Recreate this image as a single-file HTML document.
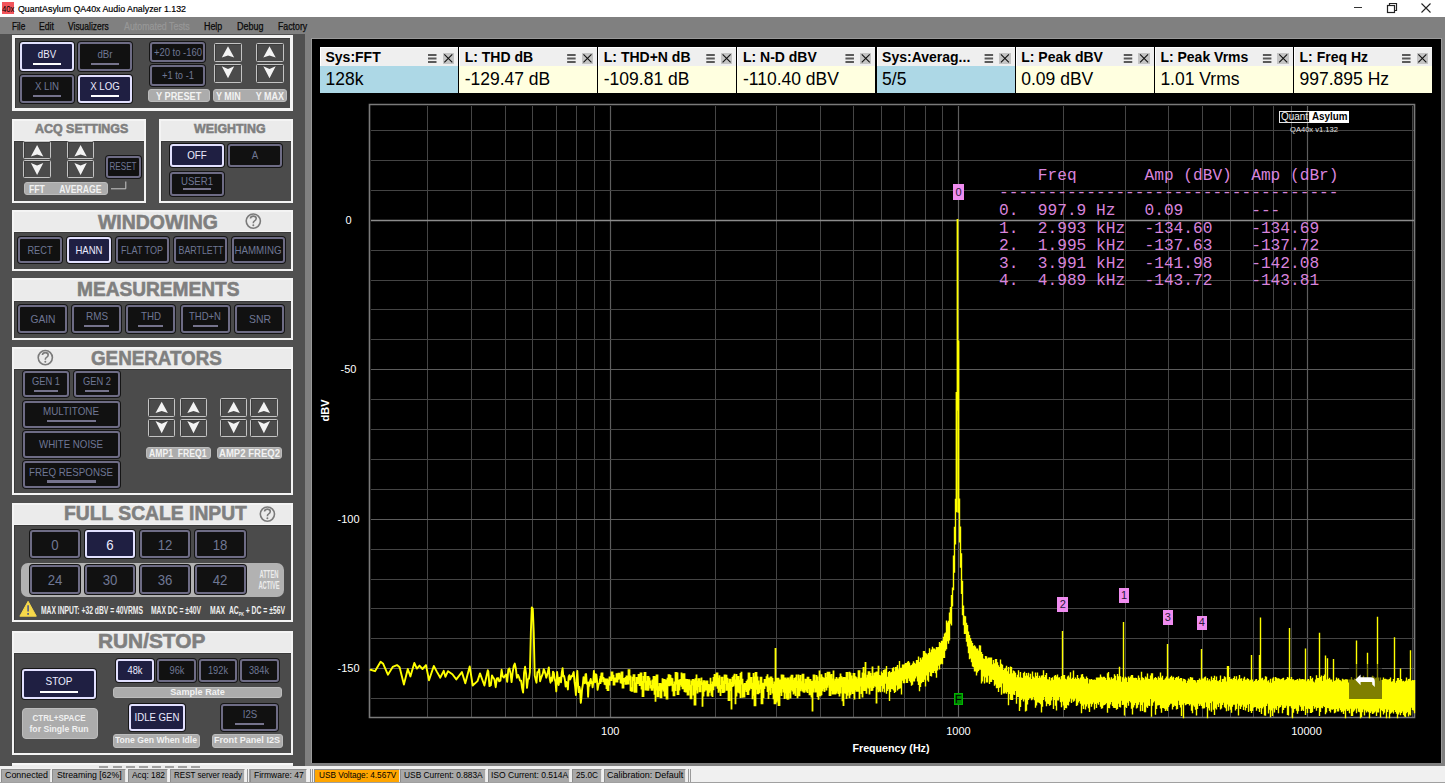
<!DOCTYPE html>
<html><head><meta charset="utf-8"><style>
html,body{margin:0;padding:0;width:1445px;height:783px;overflow:hidden;background:#fff}
body>div,body>svg{position:absolute}
svg{position:absolute;overflow:visible}
</style></head><body>
<div style="left:0px;top:0px;width:1445px;height:17px;background:#fff"></div>
<div style="left:2px;top:2px;width:12px;height:12px;background:#f2545b"></div>
<div style="left:1.50px;transform-origin:0 0;top:3.96px;font:normal 9.5px/9.5px 'Liberation Sans', sans-serif;color:#000;white-space:nowrap;transform:scaleX(0.8155);">40x</div>
<div style="left:17.50px;transform-origin:0 0;top:3.87px;font:normal 9.6px/9.6px 'Liberation Sans', sans-serif;color:#000;white-space:nowrap;transform:scaleX(0.9211);-webkit-text-stroke:0.2px #000;">QuantAsylum QA40x Audio Analyzer 1.132</div>
<div style="left:1354px;top:7px;width:8px;height:1px;background:#333"></div>
<svg style="left:1386px;top:2px" width="12" height="11"><rect x="1.5" y="3.5" width="7" height="7" fill="none" stroke="#222" stroke-width="1.2"/><path d="M3.5 3.5V1.5h7v7h-2" fill="none" stroke="#222" stroke-width="1.2"/></svg>
<svg style="left:1421px;top:3px" width="10" height="10"><path d="M0.5 0.5L9.5 9.5M9.5 0.5L0.5 9.5" stroke="#222" stroke-width="1.1"/></svg>
<div style="left:0px;top:17px;width:1445px;height:750px;background:#808080"></div>
<div style="left:11.50px;transform-origin:0 0;top:21.64px;font:normal 10px/10px 'Liberation Sans', sans-serif;color:#0a0a0a;white-space:nowrap;transform:scaleX(0.8248);-webkit-text-stroke:0.25px #0a0a0a;">File</div>
<div style="left:39.40px;transform-origin:0 0;top:21.64px;font:normal 10px/10px 'Liberation Sans', sans-serif;color:#0a0a0a;white-space:nowrap;transform:scaleX(0.8646);-webkit-text-stroke:0.25px #0a0a0a;">Edit</div>
<div style="left:68.20px;transform-origin:0 0;top:21.64px;font:normal 10px/10px 'Liberation Sans', sans-serif;color:#0a0a0a;white-space:nowrap;transform:scaleX(0.8470);-webkit-text-stroke:0.25px #0a0a0a;">Visualizers</div>
<div style="left:123.60px;transform-origin:0 0;top:21.64px;font:normal 10px/10px 'Liberation Sans', sans-serif;color:#979797;white-space:nowrap;transform:scaleX(0.8841);-webkit-text-stroke:0.25px #979797;">Automated Tests</div>
<div style="left:203.70px;transform-origin:0 0;top:21.64px;font:normal 10px/10px 'Liberation Sans', sans-serif;color:#0a0a0a;white-space:nowrap;transform:scaleX(0.8893);-webkit-text-stroke:0.25px #0a0a0a;">Help</div>
<div style="left:237.00px;transform-origin:0 0;top:21.64px;font:normal 10px/10px 'Liberation Sans', sans-serif;color:#0a0a0a;white-space:nowrap;transform:scaleX(0.8993);-webkit-text-stroke:0.25px #0a0a0a;">Debug</div>
<div style="left:277.50px;transform-origin:0 0;top:21.64px;font:normal 10px/10px 'Liberation Sans', sans-serif;color:#0a0a0a;white-space:nowrap;transform:scaleX(0.8757);-webkit-text-stroke:0.25px #0a0a0a;">Factory</div>
<div style="left:0px;top:34px;width:305px;height:734px;background:#505050"></div>
<div style="left:305px;top:34px;width:6px;height:734px;background:#808080"></div>
<div style="left:311px;top:38px;width:131px;height:1px;background:#9a9a9a"></div>
<div style="left:311px;top:38px;width:1131px;height:725px;background:#000;border-left:1px solid #9a9a9a;border-top:1px solid #9a9a9a;box-sizing:border-box"></div>
<div style="left:1441px;top:38px;width:1px;height:725px;background:#9a9a9a"></div>
<div style="left:0px;top:766px;width:1445px;height:17px;background:#f0f0f0"></div>
<div style="left:0px;top:782px;width:1445px;height:1px;background:#a0a0a0"></div>
<div style="left:1px;top:769px;width:50px;height:13px;background:#a8a8a8;border-left:1px solid #8c8c8c;border-top:1px solid #8c8c8c;border-right:1px solid #e8e8e8;box-sizing:border-box"></div>
<div style="left:5.00px;transform-origin:0 0;top:770.26px;font:normal 9.5px/9.5px 'Liberation Sans', sans-serif;color:#000;white-space:nowrap;transform:scaleX(0.9357);">Connected</div>
<div style="left:52px;top:769px;width:74px;height:13px;background:#a8a8a8;border-left:1px solid #8c8c8c;border-top:1px solid #8c8c8c;border-right:1px solid #e8e8e8;box-sizing:border-box"></div>
<div style="left:57.30px;transform-origin:0 0;top:770.26px;font:normal 9.5px/9.5px 'Liberation Sans', sans-serif;color:#000;white-space:nowrap;transform:scaleX(0.9212);">Streaming [62%]</div>
<div style="left:128px;top:769px;width:40px;height:13px;background:#a8a8a8;border-left:1px solid #8c8c8c;border-top:1px solid #8c8c8c;border-right:1px solid #e8e8e8;box-sizing:border-box"></div>
<div style="left:132.00px;transform-origin:0 0;top:770.26px;font:normal 9.5px/9.5px 'Liberation Sans', sans-serif;color:#000;white-space:nowrap;transform:scaleX(0.8800);">Acq: 182</div>
<div style="left:170px;top:769px;width:75px;height:13px;background:#a8a8a8;border-left:1px solid #8c8c8c;border-top:1px solid #8c8c8c;border-right:1px solid #e8e8e8;box-sizing:border-box"></div>
<div style="left:174.10px;transform-origin:0 0;top:770.26px;font:normal 9.5px/9.5px 'Liberation Sans', sans-serif;color:#000;white-space:nowrap;transform:scaleX(0.8436);">REST server ready</div>
<div style="left:250px;top:769px;width:57px;height:13px;background:#a8a8a8;border-left:1px solid #8c8c8c;border-top:1px solid #8c8c8c;border-right:1px solid #e8e8e8;box-sizing:border-box"></div>
<div style="left:253.90px;transform-origin:0 0;top:770.26px;font:normal 9.5px/9.5px 'Liberation Sans', sans-serif;color:#000;white-space:nowrap;transform:scaleX(0.8983);">Firmware: 47</div>
<div style="left:314px;top:769px;width:86px;height:13px;background:#ffa500;border-left:1px solid #8c8c8c;border-top:1px solid #8c8c8c;border-right:1px solid #e8e8e8;box-sizing:border-box"></div>
<div style="left:318.60px;transform-origin:0 0;top:770.26px;font:normal 9.5px/9.5px 'Liberation Sans', sans-serif;color:#000;white-space:nowrap;transform:scaleX(0.8660);">USB Voltage: 4.567V</div>
<div style="left:400px;top:769px;width:86px;height:13px;background:#a8a8a8;border-left:1px solid #8c8c8c;border-top:1px solid #8c8c8c;border-right:1px solid #e8e8e8;box-sizing:border-box"></div>
<div style="left:404.00px;transform-origin:0 0;top:770.26px;font:normal 9.5px/9.5px 'Liberation Sans', sans-serif;color:#000;white-space:nowrap;transform:scaleX(0.8818);">USB Current: 0.883A</div>
<div style="left:488px;top:769px;width:82px;height:13px;background:#a8a8a8;border-left:1px solid #8c8c8c;border-top:1px solid #8c8c8c;border-right:1px solid #e8e8e8;box-sizing:border-box"></div>
<div style="left:490.90px;transform-origin:0 0;top:770.26px;font:normal 9.5px/9.5px 'Liberation Sans', sans-serif;color:#000;white-space:nowrap;transform:scaleX(0.8969);">ISO Current: 0.514A</div>
<div style="left:572px;top:769px;width:30px;height:13px;background:#a8a8a8;border-left:1px solid #8c8c8c;border-top:1px solid #8c8c8c;border-right:1px solid #e8e8e8;box-sizing:border-box"></div>
<div style="left:576.30px;transform-origin:0 0;top:770.26px;font:normal 9.5px/9.5px 'Liberation Sans', sans-serif;color:#000;white-space:nowrap;transform:scaleX(0.8636);">25.0C</div>
<div style="left:604px;top:769px;width:82px;height:13px;background:#a8a8a8;border-left:1px solid #8c8c8c;border-top:1px solid #8c8c8c;border-right:1px solid #e8e8e8;box-sizing:border-box"></div>
<div style="left:606.70px;transform-origin:0 0;top:770.26px;font:normal 9.5px/9.5px 'Liberation Sans', sans-serif;color:#000;white-space:nowrap;transform:scaleX(0.9431);">Calibration: Default</div>
<div style="left:247px;top:769px;width:1px;height:13px;background:#9a9a9a"></div>
<div style="left:249px;top:769px;width:1px;height:13px;background:#9a9a9a"></div>
<div style="left:309.5px;top:769px;width:1px;height:13px;background:#9a9a9a"></div>
<div style="left:311.5px;top:769px;width:1px;height:13px;background:#9a9a9a"></div>
<div style="left:687.5px;top:769px;width:1px;height:13px;background:#9a9a9a"></div>
<div style="left:689.5px;top:769px;width:1px;height:13px;background:#9a9a9a"></div>
<div style="left:12px;top:35px;width:281px;height:76px;background:#f4f4f4"></div>
<div style="left:15px;top:38px;width:275px;height:70px;background:#4b4b4b;border-left:1px solid #3a3a3a;border-top:1px solid #3a3a3a;box-sizing:border-box"></div>
<div style="left:20px;top:42px;width:54px;height:29px;background:#1f1f42;border:2px solid #e2e0ff;border-radius:3px;box-sizing:border-box;box-shadow:0 0 0 1px #151515"></div>
<div style="left:-1953.00px;width:4000px;text-align:center;transform-origin:50% 0;top:48.65px;font:normal 11px/11px 'Liberation Sans', sans-serif;color:#ececff;white-space:nowrap;transform:scaleX(0.8800);">dBV</div>
<div style="left:33.2px;top:63px;width:27.5px;height:2.3px;background:#ffffff"></div>
<div style="left:78px;top:42px;width:54px;height:29px;background:#111111;border:2px solid #6e6c85;border-radius:3px;box-sizing:border-box;box-shadow:0 0 0 1px #151515"></div>
<div style="left:-1895.00px;width:4000px;text-align:center;transform-origin:50% 0;top:48.65px;font:normal 11px/11px 'Liberation Sans', sans-serif;color:#6f7794;white-space:nowrap;transform:scaleX(0.8800);">dBr</div>
<div style="left:91.2px;top:63px;width:27.5px;height:2.3px;background:#75738c"></div>
<div style="left:20px;top:74.5px;width:54px;height:28.5px;background:#111111;border:2px solid #6e6c85;border-radius:3px;box-sizing:border-box;box-shadow:0 0 0 1px #151515"></div>
<div style="left:-1953.00px;width:4000px;text-align:center;transform-origin:50% 0;top:80.90px;font:normal 11px/11px 'Liberation Sans', sans-serif;color:#6f7794;white-space:nowrap;transform:scaleX(0.8800);">X LIN</div>
<div style="left:33.2px;top:95px;width:27.5px;height:2.3px;background:#75738c"></div>
<div style="left:78px;top:74.5px;width:54px;height:28.5px;background:#1f1f42;border:2px solid #e2e0ff;border-radius:3px;box-sizing:border-box;box-shadow:0 0 0 1px #151515"></div>
<div style="left:-1895.00px;width:4000px;text-align:center;transform-origin:50% 0;top:80.90px;font:normal 11px/11px 'Liberation Sans', sans-serif;color:#ececff;white-space:nowrap;transform:scaleX(0.8800);">X LOG</div>
<div style="left:91.2px;top:95px;width:27.5px;height:2.3px;background:#ffffff"></div>
<div style="left:150px;top:42px;width:55px;height:20px;background:#111111;border:2px solid #6e6c85;border-radius:3px;box-sizing:border-box;box-shadow:0 0 0 1px #151515"></div>
<div style="left:-1822.50px;width:4000px;text-align:center;transform-origin:50% 0;top:46.89px;font:normal 10.5px/10.5px 'Liberation Sans', sans-serif;color:#6f7794;white-space:nowrap;transform:scaleX(0.8985);">+20 to -160</div>
<div style="left:150px;top:65px;width:55px;height:20.5px;background:#111111;border:2px solid #6e6c85;border-radius:3px;box-sizing:border-box;box-shadow:0 0 0 1px #151515"></div>
<div style="left:-1822.50px;width:4000px;text-align:center;transform-origin:50% 0;top:70.14px;font:normal 10.5px/10.5px 'Liberation Sans', sans-serif;color:#6f7794;white-space:nowrap;transform:scaleX(0.8912);">+1 to -1</div>
<div style="left:214px;top:42.6px;width:28px;height:19.5px;border:1px solid #c4c4c4;border-radius:1.5px;box-sizing:border-box;box-shadow:inset 1px 1px 0 #3c3c3c"></div>
<svg style="left:0;top:0" width="1" height="1"><path d="M228.0 46.2 L234.2 57.6 L228.0 55.6 L221.8 57.6Z" fill="#f4f4f4"/></svg>
<div style="left:214px;top:63.6px;width:28px;height:19.5px;border:1px solid #c4c4c4;border-radius:1.5px;box-sizing:border-box;box-shadow:inset 1px 1px 0 #3c3c3c"></div>
<svg style="left:0;top:0" width="1" height="1"><path d="M221.8 66.2 L228.0 68.9 L234.2 66.2 L228.0 78.3Z" fill="#f4f4f4"/></svg>
<div style="left:255.5px;top:42.6px;width:28px;height:19.5px;border:1px solid #c4c4c4;border-radius:1.5px;box-sizing:border-box;box-shadow:inset 1px 1px 0 #3c3c3c"></div>
<svg style="left:0;top:0" width="1" height="1"><path d="M269.5 46.2 L275.7 57.6 L269.5 55.6 L263.3 57.6Z" fill="#f4f4f4"/></svg>
<div style="left:255.5px;top:63.6px;width:28px;height:19.5px;border:1px solid #c4c4c4;border-radius:1.5px;box-sizing:border-box;box-shadow:inset 1px 1px 0 #3c3c3c"></div>
<svg style="left:0;top:0" width="1" height="1"><path d="M263.3 66.2 L269.5 68.9 L275.7 66.2 L269.5 78.3Z" fill="#f4f4f4"/></svg>
<div style="left:147.5px;top:89.3px;width:62.5px;height:13.0px;background:#acacac;border:1px solid #bcbcbc;border-radius:3px;box-sizing:border-box"></div>
<div style="left:155.80px;transform-origin:0 0;top:91.74px;font:bold 10.47px/10.47px 'Liberation Sans', sans-serif;color:#f2f2f2;white-space:nowrap;transform:scaleX(0.8800);">Y PRESET</div>
<div style="left:213px;top:89.3px;width:74px;height:13.0px;background:#acacac;border:1px solid #bcbcbc;border-radius:3px;box-sizing:border-box"></div>
<div style="left:216.00px;transform-origin:0 0;top:91.74px;font:bold 10.47px/10.47px 'Liberation Sans', sans-serif;color:#f2f2f2;white-space:nowrap;transform:scaleX(0.8574);">Y MIN&nbsp;&nbsp;&nbsp;&nbsp;&nbsp;&nbsp;Y MAX</div>
<div style="left:12px;top:119px;width:134px;height:84px;background:#f4f4f4"></div>
<div style="left:14px;top:121px;width:130px;height:18.5px;background:#ebebeb"></div>
<div style="left:14px;top:141.0px;width:130px;height:60.0px;background:#4b4b4b;border-left:1px solid #3a3a3a;border-top:1px solid #3a3a3a;box-sizing:border-box"></div>
<div style="left:34.80px;transform-origin:0 0;top:122.31px;font:bold 13.69px/13.69px 'Liberation Sans', sans-serif;color:#7f7f7f;white-space:nowrap;transform:scaleX(0.9087);-webkit-text-stroke:0.6px #7f7f7f;">ACQ SETTINGS</div>
<div style="left:23.3px;top:141.4px;width:27.6px;height:17.3px;border:1px solid #c4c4c4;border-radius:1.5px;box-sizing:border-box;box-shadow:inset 1px 1px 0 #3c3c3c"></div>
<svg style="left:0;top:0" width="1" height="1"><path d="M37.1 145.0 L43.3 156.4 L37.1 154.4 L30.9 156.4Z" fill="#f4f4f4"/></svg>
<div style="left:23.3px;top:160.3px;width:27.6px;height:17.3px;border:1px solid #c4c4c4;border-radius:1.5px;box-sizing:border-box;box-shadow:inset 1px 1px 0 #3c3c3c"></div>
<svg style="left:0;top:0" width="1" height="1"><path d="M30.9 162.9 L37.1 165.6 L43.3 162.9 L37.1 175.0Z" fill="#f4f4f4"/></svg>
<div style="left:67px;top:141.4px;width:27.2px;height:17.3px;border:1px solid #c4c4c4;border-radius:1.5px;box-sizing:border-box;box-shadow:inset 1px 1px 0 #3c3c3c"></div>
<svg style="left:0;top:0" width="1" height="1"><path d="M80.6 145.0 L86.8 156.4 L80.6 154.4 L74.4 156.4Z" fill="#f4f4f4"/></svg>
<div style="left:67px;top:160.3px;width:27.2px;height:17.3px;border:1px solid #c4c4c4;border-radius:1.5px;box-sizing:border-box;box-shadow:inset 1px 1px 0 #3c3c3c"></div>
<svg style="left:0;top:0" width="1" height="1"><path d="M74.4 162.9 L80.6 165.6 L86.8 162.9 L80.6 175.0Z" fill="#f4f4f4"/></svg>
<div style="left:105.5px;top:156px;width:35.69999999999999px;height:22.400000000000006px;background:#111111;border:2px solid #6e6c85;border-radius:3px;box-sizing:border-box;box-shadow:0 0 0 1px #151515"></div>
<div style="left:-1876.65px;width:4000px;text-align:center;transform-origin:50% 0;top:162.33px;font:normal 10px/10px 'Liberation Sans', sans-serif;color:#6f7794;white-space:nowrap;transform:scaleX(0.8097);">RESET</div>
<div style="left:23.6px;top:182.3px;width:84.4px;height:13.0px;background:#acacac;border:1px solid #bcbcbc;border-radius:3px;box-sizing:border-box"></div>
<div style="left:28.50px;transform-origin:0 0;top:183.74px;font:bold 11.17px/11.17px 'Liberation Sans', sans-serif;color:#f2f2f2;white-space:nowrap;transform:scaleX(0.7763);">FFT&nbsp;&nbsp;&nbsp;&nbsp;&nbsp;&nbsp;AVERAGE</div>
<svg style="left:0;top:0" width="1" height="1"><path d="M111 188.8H125.8V181.5" fill="none" stroke="#c8c8c8" stroke-width="1"/></svg>
<div style="left:159px;top:119px;width:134px;height:84px;background:#f4f4f4"></div>
<div style="left:161px;top:121px;width:130px;height:18.5px;background:#ebebeb"></div>
<div style="left:161px;top:141.0px;width:130px;height:60.0px;background:#4b4b4b;border-left:1px solid #3a3a3a;border-top:1px solid #3a3a3a;box-sizing:border-box"></div>
<div style="left:193.70px;transform-origin:0 0;top:122.31px;font:bold 13.69px/13.69px 'Liberation Sans', sans-serif;color:#7f7f7f;white-space:nowrap;transform:scaleX(0.9054);-webkit-text-stroke:0.6px #7f7f7f;">WEIGHTING</div>
<div style="left:170px;top:144px;width:53.5px;height:23px;background:#1f1f42;border:2px solid #e2e0ff;border-radius:3px;box-sizing:border-box;box-shadow:0 0 0 1px #151515"></div>
<div style="left:-1803.25px;width:4000px;text-align:center;transform-origin:50% 0;top:150.15px;font:normal 11px/11px 'Liberation Sans', sans-serif;color:#ececff;white-space:nowrap;transform:scaleX(0.8864);">OFF</div>
<div style="left:228px;top:144px;width:53.60000000000002px;height:23px;background:#111111;border:2px solid #6e6c85;border-radius:3px;box-sizing:border-box;box-shadow:0 0 0 1px #151515"></div>
<div style="left:-1745.20px;width:4000px;text-align:center;transform-origin:50% 0;top:150.15px;font:normal 11px/11px 'Liberation Sans', sans-serif;color:#6f7794;white-space:nowrap;transform:scaleX(0.8800);">A</div>
<div style="left:170px;top:172px;width:53.5px;height:23.5px;background:#111111;border:2px solid #6e6c85;border-radius:3px;box-sizing:border-box;box-shadow:0 0 0 1px #151515"></div>
<div style="left:-1803.25px;width:4000px;text-align:center;transform-origin:50% 0;top:175.90px;font:normal 11px/11px 'Liberation Sans', sans-serif;color:#6f7794;white-space:nowrap;transform:scaleX(0.8722);">USER1</div>
<div style="left:183.0px;top:187.5px;width:27.5px;height:2.3px;background:#75738c"></div>
<div style="left:12px;top:210px;width:281px;height:61px;background:#f4f4f4"></div>
<div style="left:14px;top:212px;width:277px;height:18.5px;background:#ebebeb"></div>
<div style="left:14px;top:232.0px;width:277px;height:37.0px;background:#4b4b4b;border-left:1px solid #3a3a3a;border-top:1px solid #3a3a3a;box-sizing:border-box"></div>
<div style="left:97.90px;transform-origin:0 0;top:212.28px;font:bold 20.11px/20.11px 'Liberation Sans', sans-serif;color:#7f7f7f;white-space:nowrap;transform:scaleX(0.9661);-webkit-text-stroke:0.6px #7f7f7f;">WINDOWING</div>
<svg style="left:0;top:0" width="1" height="1"><circle cx="253.3" cy="221.1" r="7.1" fill="none" stroke="#7a7a7a" stroke-width="1.6"/><path d="M250.40 218.50Q250.70 216.10 253.30 216.10Q256.20 216.10 256.20 218.60Q256.20 220.20 254.30 221.10Q253.30 221.60 253.30 223.30" fill="none" stroke="#7a7a7a" stroke-width="1.6"/><circle cx="253.3" cy="225.30" r="1" fill="#7a7a7a"/></svg>
<div style="left:17.6px;top:236.7px;width:44.699999999999996px;height:26.400000000000034px;background:#111111;border:2px solid #6e6c85;border-radius:3px;box-sizing:border-box;box-shadow:0 0 0 1px #151515"></div>
<div style="left:-1960.05px;width:4000px;text-align:center;transform-origin:50% 0;top:244.55px;font:normal 11px/11px 'Liberation Sans', sans-serif;color:#6f7794;white-space:nowrap;transform:scaleX(0.8346);">RECT</div>
<div style="left:66.8px;top:236.7px;width:44.7px;height:26.400000000000034px;background:#1f1f42;border:2px solid #e2e0ff;border-radius:3px;box-sizing:border-box;box-shadow:0 0 0 1px #151515"></div>
<div style="left:-1910.85px;width:4000px;text-align:center;transform-origin:50% 0;top:244.55px;font:normal 11px/11px 'Liberation Sans', sans-serif;color:#ececff;white-space:nowrap;transform:scaleX(0.8662);">HANN</div>
<div style="left:115.6px;top:236.7px;width:53.599999999999994px;height:26.400000000000034px;background:#111111;border:2px solid #6e6c85;border-radius:3px;box-sizing:border-box;box-shadow:0 0 0 1px #151515"></div>
<div style="left:-1857.60px;width:4000px;text-align:center;transform-origin:50% 0;top:244.55px;font:normal 11px/11px 'Liberation Sans', sans-serif;color:#6f7794;white-space:nowrap;transform:scaleX(0.8210);">FLAT TOP</div>
<div style="left:173.8px;top:236.7px;width:53.5px;height:26.400000000000034px;background:#111111;border:2px solid #6e6c85;border-radius:3px;box-sizing:border-box;box-shadow:0 0 0 1px #151515"></div>
<div style="left:-1799.45px;width:4000px;text-align:center;transform-origin:50% 0;top:244.55px;font:normal 11px/11px 'Liberation Sans', sans-serif;color:#6f7794;white-space:nowrap;transform:scaleX(0.8031);">BARTLETT</div>
<div style="left:231.5px;top:236.7px;width:53.89999999999998px;height:26.400000000000034px;background:#111111;border:2px solid #6e6c85;border-radius:3px;box-sizing:border-box;box-shadow:0 0 0 1px #151515"></div>
<div style="left:-1741.55px;width:4000px;text-align:center;transform-origin:50% 0;top:244.55px;font:normal 11px/11px 'Liberation Sans', sans-serif;color:#6f7794;white-space:nowrap;transform:scaleX(0.8839);">HAMMING</div>
<div style="left:12px;top:278px;width:281px;height:62px;background:#f4f4f4"></div>
<div style="left:14px;top:280px;width:277px;height:19.5px;background:#ebebeb"></div>
<div style="left:14px;top:301.0px;width:277px;height:37.0px;background:#4b4b4b;border-left:1px solid #3a3a3a;border-top:1px solid #3a3a3a;box-sizing:border-box"></div>
<div style="left:77.10px;transform-origin:0 0;top:279.87px;font:bold 19.41px/19.41px 'Liberation Sans', sans-serif;color:#7f7f7f;white-space:nowrap;transform:scaleX(0.9844);-webkit-text-stroke:0.6px #7f7f7f;">MEASUREMENTS</div>
<div style="left:17.6px;top:304.8px;width:49.9px;height:28.399999999999977px;background:#111111;border:2px solid #6e6c85;border-radius:3px;box-sizing:border-box;box-shadow:0 0 0 1px #151515"></div>
<div style="left:-1957.45px;width:4000px;text-align:center;transform-origin:50% 0;top:313.65px;font:normal 11px/11px 'Liberation Sans', sans-serif;color:#6f7794;white-space:nowrap;transform:scaleX(0.9292);">GAIN</div>
<div style="left:72px;top:304.8px;width:49.400000000000006px;height:28.399999999999977px;background:#111111;border:2px solid #6e6c85;border-radius:3px;box-sizing:border-box;box-shadow:0 0 0 1px #151515"></div>
<div style="left:-1903.30px;width:4000px;text-align:center;transform-origin:50% 0;top:311.15px;font:normal 11px/11px 'Liberation Sans', sans-serif;color:#6f7794;white-space:nowrap;transform:scaleX(0.8997);">RMS</div>
<div style="left:84.2px;top:325.2px;width:25px;height:2.3px;background:#75738c"></div>
<div style="left:126.2px;top:304.8px;width:49.2px;height:28.399999999999977px;background:#111111;border:2px solid #6e6c85;border-radius:3px;box-sizing:border-box;box-shadow:0 0 0 1px #151515"></div>
<div style="left:-1849.20px;width:4000px;text-align:center;transform-origin:50% 0;top:311.15px;font:normal 11px/11px 'Liberation Sans', sans-serif;color:#6f7794;white-space:nowrap;transform:scaleX(0.8846);">THD</div>
<div style="left:138.3px;top:325.2px;width:25px;height:2.3px;background:#75738c"></div>
<div style="left:180.6px;top:304.8px;width:49.20000000000002px;height:28.399999999999977px;background:#111111;border:2px solid #6e6c85;border-radius:3px;box-sizing:border-box;box-shadow:0 0 0 1px #151515"></div>
<div style="left:-1794.80px;width:4000px;text-align:center;transform-origin:50% 0;top:311.15px;font:normal 11px/11px 'Liberation Sans', sans-serif;color:#6f7794;white-space:nowrap;transform:scaleX(0.8652);">THD+N</div>
<div style="left:192.7px;top:325.2px;width:25px;height:2.3px;background:#75738c"></div>
<div style="left:234.6px;top:304.8px;width:49.79999999999998px;height:28.399999999999977px;background:#111111;border:2px solid #6e6c85;border-radius:3px;box-sizing:border-box;box-shadow:0 0 0 1px #151515"></div>
<div style="left:-1740.50px;width:4000px;text-align:center;transform-origin:50% 0;top:313.65px;font:normal 11px/11px 'Liberation Sans', sans-serif;color:#6f7794;white-space:nowrap;transform:scaleX(0.9469);">SNR</div>
<div style="left:12px;top:346.5px;width:281px;height:148.5px;background:#f4f4f4"></div>
<div style="left:14px;top:348.5px;width:277px;height:19.0px;background:#ebebeb"></div>
<div style="left:14px;top:369.0px;width:277px;height:124.0px;background:#4b4b4b;border-left:1px solid #3a3a3a;border-top:1px solid #3a3a3a;box-sizing:border-box"></div>
<div style="left:90.60px;transform-origin:0 0;top:347.68px;font:bold 20.81px/20.81px 'Liberation Sans', sans-serif;color:#7f7f7f;white-space:nowrap;transform:scaleX(0.9031);-webkit-text-stroke:0.6px #7f7f7f;">GENERATORS</div>
<svg style="left:0;top:0" width="1" height="1"><circle cx="45.3" cy="357.6" r="7.1" fill="none" stroke="#7a7a7a" stroke-width="1.6"/><path d="M42.40 355.00Q42.70 352.60 45.30 352.60Q48.20 352.60 48.20 355.10Q48.20 356.70 46.30 357.60Q45.30 358.10 45.30 359.80" fill="none" stroke="#7a7a7a" stroke-width="1.6"/><circle cx="45.3" cy="361.80" r="1" fill="#7a7a7a"/></svg>
<div style="left:22.8px;top:370.7px;width:46.7px;height:26.80000000000001px;background:#111111;border:2px solid #6e6c85;border-radius:3px;box-sizing:border-box;box-shadow:0 0 0 1px #151515"></div>
<div style="left:-1953.85px;width:4000px;text-align:center;transform-origin:50% 0;top:376.25px;font:normal 11px/11px 'Liberation Sans', sans-serif;color:#6f7794;white-space:nowrap;transform:scaleX(0.8481);">GEN 1</div>
<div style="left:34.1px;top:389.5px;width:24px;height:2.3px;background:#75738c"></div>
<div style="left:73.7px;top:370.7px;width:46.3px;height:26.80000000000001px;background:#111111;border:2px solid #6e6c85;border-radius:3px;box-sizing:border-box;box-shadow:0 0 0 1px #151515"></div>
<div style="left:-1903.15px;width:4000px;text-align:center;transform-origin:50% 0;top:376.25px;font:normal 11px/11px 'Liberation Sans', sans-serif;color:#6f7794;white-space:nowrap;transform:scaleX(0.8481);">GEN 2</div>
<div style="left:84.8px;top:389.5px;width:24px;height:2.3px;background:#75738c"></div>
<div style="left:22.8px;top:400.8px;width:97.2px;height:26.80000000000001px;background:#111111;border:2px solid #6e6c85;border-radius:3px;box-sizing:border-box;box-shadow:0 0 0 1px #151515"></div>
<div style="left:-1928.60px;width:4000px;text-align:center;transform-origin:50% 0;top:406.35px;font:normal 11px/11px 'Liberation Sans', sans-serif;color:#6f7794;white-space:nowrap;transform:scaleX(0.8953);">MULTITONE</div>
<div style="left:46.9px;top:419.6px;width:49px;height:2.3px;background:#75738c"></div>
<div style="left:22.8px;top:431.3px;width:97.2px;height:26.599999999999966px;background:#111111;border:2px solid #6e6c85;border-radius:3px;box-sizing:border-box;box-shadow:0 0 0 1px #151515"></div>
<div style="left:-1928.60px;width:4000px;text-align:center;transform-origin:50% 0;top:439.25px;font:normal 11px/11px 'Liberation Sans', sans-serif;color:#6f7794;white-space:nowrap;transform:scaleX(0.8799);">WHITE NOISE</div>
<div style="left:22.8px;top:461.4px;width:97.2px;height:27.0px;background:#111111;border:2px solid #6e6c85;border-radius:3px;box-sizing:border-box;box-shadow:0 0 0 1px #151515"></div>
<div style="left:-1928.60px;width:4000px;text-align:center;transform-origin:50% 0;top:467.05px;font:normal 11px/11px 'Liberation Sans', sans-serif;color:#6f7794;white-space:nowrap;transform:scaleX(0.8865);">FREQ RESPONSE</div>
<div style="left:46.9px;top:480.4px;width:49px;height:2.3px;background:#75738c"></div>
<div style="left:148px;top:398.1px;width:27.4px;height:18.7px;border:1px solid #c4c4c4;border-radius:1.5px;box-sizing:border-box;box-shadow:inset 1px 1px 0 #3c3c3c"></div>
<svg style="left:0;top:0" width="1" height="1"><path d="M161.7 401.7 L167.9 413.1 L161.7 411.1 L155.5 413.1Z" fill="#f4f4f4"/></svg>
<div style="left:148px;top:418.5px;width:27.4px;height:18.7px;border:1px solid #c4c4c4;border-radius:1.5px;box-sizing:border-box;box-shadow:inset 1px 1px 0 #3c3c3c"></div>
<svg style="left:0;top:0" width="1" height="1"><path d="M155.5 421.1 L161.7 423.8 L167.9 421.1 L161.7 433.2Z" fill="#f4f4f4"/></svg>
<div style="left:179.8px;top:398.1px;width:27.4px;height:18.7px;border:1px solid #c4c4c4;border-radius:1.5px;box-sizing:border-box;box-shadow:inset 1px 1px 0 #3c3c3c"></div>
<svg style="left:0;top:0" width="1" height="1"><path d="M193.5 401.7 L199.7 413.1 L193.5 411.1 L187.3 413.1Z" fill="#f4f4f4"/></svg>
<div style="left:179.8px;top:418.5px;width:27.4px;height:18.7px;border:1px solid #c4c4c4;border-radius:1.5px;box-sizing:border-box;box-shadow:inset 1px 1px 0 #3c3c3c"></div>
<svg style="left:0;top:0" width="1" height="1"><path d="M187.3 421.1 L193.5 423.8 L199.7 421.1 L193.5 433.2Z" fill="#f4f4f4"/></svg>
<div style="left:220px;top:398.1px;width:27.4px;height:18.7px;border:1px solid #c4c4c4;border-radius:1.5px;box-sizing:border-box;box-shadow:inset 1px 1px 0 #3c3c3c"></div>
<svg style="left:0;top:0" width="1" height="1"><path d="M233.7 401.7 L239.9 413.1 L233.7 411.1 L227.5 413.1Z" fill="#f4f4f4"/></svg>
<div style="left:220px;top:418.5px;width:27.4px;height:18.7px;border:1px solid #c4c4c4;border-radius:1.5px;box-sizing:border-box;box-shadow:inset 1px 1px 0 #3c3c3c"></div>
<svg style="left:0;top:0" width="1" height="1"><path d="M227.5 421.1 L233.7 423.8 L239.9 421.1 L233.7 433.2Z" fill="#f4f4f4"/></svg>
<div style="left:250.2px;top:398.1px;width:27.4px;height:18.7px;border:1px solid #c4c4c4;border-radius:1.5px;box-sizing:border-box;box-shadow:inset 1px 1px 0 #3c3c3c"></div>
<svg style="left:0;top:0" width="1" height="1"><path d="M263.9 401.7 L270.1 413.1 L263.9 411.1 L257.7 413.1Z" fill="#f4f4f4"/></svg>
<div style="left:250.2px;top:418.5px;width:27.4px;height:18.7px;border:1px solid #c4c4c4;border-radius:1.5px;box-sizing:border-box;box-shadow:inset 1px 1px 0 #3c3c3c"></div>
<svg style="left:0;top:0" width="1" height="1"><path d="M257.7 421.1 L263.9 423.8 L270.1 421.1 L263.9 433.2Z" fill="#f4f4f4"/></svg>
<div style="left:146px;top:446.5px;width:64.69999999999999px;height:12.899999999999977px;background:#acacac;border:1px solid #bcbcbc;border-radius:3px;box-sizing:border-box"></div>
<div style="left:148.50px;transform-origin:0 0;top:447.64px;font:bold 11.17px/11.17px 'Liberation Sans', sans-serif;color:#f2f2f2;white-space:nowrap;transform:scaleX(0.7729);">AMP1&nbsp;&nbsp;FREQ1</div>
<div style="left:217px;top:446.5px;width:64.69999999999999px;height:12.899999999999977px;background:#acacac;border:1px solid #bcbcbc;border-radius:3px;box-sizing:border-box"></div>
<div style="left:219.00px;transform-origin:0 0;top:447.64px;font:bold 11.17px/11.17px 'Liberation Sans', sans-serif;color:#f2f2f2;white-space:nowrap;transform:scaleX(0.8556);">AMP2 FREQ2</div>
<div style="left:12px;top:503px;width:281px;height:118.5px;background:#f4f4f4"></div>
<div style="left:14px;top:505px;width:277px;height:18.5px;background:#ebebeb"></div>
<div style="left:14px;top:525.0px;width:277px;height:94.5px;background:#4b4b4b;border-left:1px solid #3a3a3a;border-top:1px solid #3a3a3a;box-sizing:border-box"></div>
<div style="left:64.30px;transform-origin:0 0;top:504.45px;font:bold 19.55px/19.55px 'Liberation Sans', sans-serif;color:#7f7f7f;white-space:nowrap;transform:scaleX(0.9876);-webkit-text-stroke:0.6px #7f7f7f;">FULL SCALE INPUT</div>
<svg style="left:0;top:0" width="1" height="1"><circle cx="267.4" cy="514.1" r="7.1" fill="none" stroke="#7a7a7a" stroke-width="1.6"/><path d="M264.50 511.50Q264.80 509.10 267.40 509.10Q270.30 509.10 270.30 511.60Q270.30 513.20 268.40 514.10Q267.40 514.60 267.40 516.30" fill="none" stroke="#7a7a7a" stroke-width="1.6"/><circle cx="267.4" cy="518.30" r="1" fill="#7a7a7a"/></svg>
<div style="left:29.7px;top:529.9px;width:50.8px;height:28.0px;background:#111111;border:2px solid #6e6c85;border-radius:3px;box-sizing:border-box;box-shadow:0 0 0 1px #151515"></div>
<div style="left:-1944.90px;width:4000px;text-align:center;transform-origin:50% 0;top:536.60px;font:normal 15px/15px 'Liberation Sans', sans-serif;color:#6f7794;white-space:nowrap;transform:scaleX(0.8800);">0</div>
<div style="left:84.7px;top:529.9px;width:50.7px;height:28.0px;background:#1f1f42;border:2px solid #e2e0ff;border-radius:3px;box-sizing:border-box;box-shadow:0 0 0 1px #151515"></div>
<div style="left:-1889.95px;width:4000px;text-align:center;transform-origin:50% 0;top:536.60px;font:normal 15px/15px 'Liberation Sans', sans-serif;color:#ececff;white-space:nowrap;transform:scaleX(0.8800);">6</div>
<div style="left:139.7px;top:529.9px;width:50.70000000000002px;height:28.0px;background:#111111;border:2px solid #6e6c85;border-radius:3px;box-sizing:border-box;box-shadow:0 0 0 1px #151515"></div>
<div style="left:-1834.95px;width:4000px;text-align:center;transform-origin:50% 0;top:536.60px;font:normal 15px/15px 'Liberation Sans', sans-serif;color:#6f7794;white-space:nowrap;transform:scaleX(0.8800);">12</div>
<div style="left:194.7px;top:529.9px;width:50.900000000000006px;height:28.0px;background:#111111;border:2px solid #6e6c85;border-radius:3px;box-sizing:border-box;box-shadow:0 0 0 1px #151515"></div>
<div style="left:-1779.85px;width:4000px;text-align:center;transform-origin:50% 0;top:536.60px;font:normal 15px/15px 'Liberation Sans', sans-serif;color:#6f7794;white-space:nowrap;transform:scaleX(0.8800);">18</div>
<div style="left:20.8px;top:563.1px;width:263px;height:34px;background:#b2b2b2;border-radius:7px"></div>
<div style="left:29.7px;top:565.2px;width:50.8px;height:28.399999999999977px;background:#111111;border:2px solid #6e6c85;border-radius:3px;box-sizing:border-box;box-shadow:0 0 0 1px #151515"></div>
<div style="left:-1944.90px;width:4000px;text-align:center;transform-origin:50% 0;top:572.10px;font:normal 15px/15px 'Liberation Sans', sans-serif;color:#6f7794;white-space:nowrap;transform:scaleX(0.8800);">24</div>
<div style="left:84.7px;top:565.2px;width:50.7px;height:28.399999999999977px;background:#111111;border:2px solid #6e6c85;border-radius:3px;box-sizing:border-box;box-shadow:0 0 0 1px #151515"></div>
<div style="left:-1889.95px;width:4000px;text-align:center;transform-origin:50% 0;top:572.10px;font:normal 15px/15px 'Liberation Sans', sans-serif;color:#6f7794;white-space:nowrap;transform:scaleX(0.8800);">30</div>
<div style="left:139.7px;top:565.2px;width:50.70000000000002px;height:28.399999999999977px;background:#111111;border:2px solid #6e6c85;border-radius:3px;box-sizing:border-box;box-shadow:0 0 0 1px #151515"></div>
<div style="left:-1834.95px;width:4000px;text-align:center;transform-origin:50% 0;top:572.10px;font:normal 15px/15px 'Liberation Sans', sans-serif;color:#6f7794;white-space:nowrap;transform:scaleX(0.8800);">36</div>
<div style="left:194.7px;top:565.2px;width:50.900000000000006px;height:28.399999999999977px;background:#111111;border:2px solid #6e6c85;border-radius:3px;box-sizing:border-box;box-shadow:0 0 0 1px #151515"></div>
<div style="left:-1779.85px;width:4000px;text-align:center;transform-origin:50% 0;top:572.10px;font:normal 15px/15px 'Liberation Sans', sans-serif;color:#6f7794;white-space:nowrap;transform:scaleX(0.8800);">42</div>
<div style="left:-1730.70px;width:4000px;text-align:center;transform-origin:50% 0;top:570.33px;font:bold 10px/10px 'Liberation Sans', sans-serif;color:#ececec;white-space:nowrap;transform:scaleX(0.5829);">ATTEN</div>
<div style="left:-1730.70px;width:4000px;text-align:center;transform-origin:50% 0;top:581.33px;font:bold 10px/10px 'Liberation Sans', sans-serif;color:#ececec;white-space:nowrap;transform:scaleX(0.5781);">ACTIVE</div>
<svg style="left:0;top:0" width="1" height="1"><path d="M28.1 601.3L36.3 616.2H19.9Z" fill="#f6d84a" stroke="#f6d84a" stroke-width="1" stroke-linejoin="round"/><path d="M28.1 605.2V611.4" stroke="#5a6282" stroke-width="1.7"/><rect x="27.2" y="613" width="1.8" height="1.8" fill="#5a6282"/></svg>
<div style="left:41.10px;transform-origin:0 0;top:604.99px;font:bold 11px/11px 'Liberation Sans', sans-serif;color:#f0f0f0;white-space:nowrap;transform:scaleX(0.6134);">MAX INPUT: +32 dBV = 40VRMS</div>
<div style="left:151.00px;transform-origin:0 0;top:604.99px;font:bold 11px/11px 'Liberation Sans', sans-serif;color:#f0f0f0;white-space:nowrap;transform:scaleX(0.6131);">MAX DC = ±40V</div>
<div style="left:210.00px;transform-origin:0 0;top:604.99px;font:bold 11px/11px 'Liberation Sans', sans-serif;color:#f0f0f0;white-space:nowrap;transform:scaleX(0.6179);">MAX&nbsp;&nbsp;AC<sub style="font-size:6px;vertical-align:-2px">PK</sub> + DC = ±56V</div>
<div style="left:12px;top:630.5px;width:281px;height:124.5px;background:#f4f4f4"></div>
<div style="left:14px;top:632.5px;width:277px;height:19.0px;background:#ebebeb"></div>
<div style="left:14px;top:653.0px;width:277px;height:100.0px;background:#4b4b4b;border-left:1px solid #3a3a3a;border-top:1px solid #3a3a3a;box-sizing:border-box"></div>
<div style="left:97.90px;transform-origin:0 0;top:632.10px;font:bold 19.97px/19.97px 'Liberation Sans', sans-serif;color:#7f7f7f;white-space:nowrap;transform:scaleX(1.0443);-webkit-text-stroke:0.6px #7f7f7f;">RUN/STOP</div>
<div style="left:21.5px;top:669.4px;width:74.4px;height:29.600000000000023px;background:#1f1f42;border:2px solid #e2e0ff;border-radius:3px;box-sizing:border-box;box-shadow:0 0 0 1px #151515"></div>
<div style="left:-1941.30px;width:4000px;text-align:center;transform-origin:50% 0;top:676.11px;font:normal 11.5px/11.5px 'Liberation Sans', sans-serif;color:#ececff;white-space:nowrap;transform:scaleX(0.8679);">STOP</div>
<div style="left:39.7px;top:691px;width:38px;height:2.3px;background:#ffffff"></div>
<div style="left:21.5px;top:708.2px;width:76px;height:31px;background:#acacac;border:1px solid #bcbcbc;border-radius:4px;box-sizing:border-box"></div>
<div style="left:-1941.40px;width:4000px;text-align:center;transform-origin:50% 0;top:714.30px;font:bold 8.5px/8.5px 'Liberation Sans', sans-serif;color:#f0f0f0;white-space:nowrap;transform:scaleX(0.9417);">CTRL+SPACE</div>
<div style="left:-1941.40px;width:4000px;text-align:center;transform-origin:50% 0;top:724.80px;font:bold 8.5px/8.5px 'Liberation Sans', sans-serif;color:#f0f0f0;white-space:nowrap;transform:scaleX(1.0156);">for Single Run</div>
<div style="left:115.9px;top:658.7px;width:38.099999999999994px;height:23.59999999999991px;background:#1f1f42;border:2px solid #e2e0ff;border-radius:3px;box-sizing:border-box;box-shadow:0 0 0 1px #151515"></div>
<div style="left:-1865.05px;width:4000px;text-align:center;transform-origin:50% 0;top:665.39px;font:normal 10.5px/10.5px 'Liberation Sans', sans-serif;color:#ececff;white-space:nowrap;transform:scaleX(0.8800);">48k</div>
<div style="left:157.3px;top:658.7px;width:38.599999999999994px;height:23.59999999999991px;background:#111111;border:2px solid #6e6c85;border-radius:3px;box-sizing:border-box;box-shadow:0 0 0 1px #151515"></div>
<div style="left:-1823.40px;width:4000px;text-align:center;transform-origin:50% 0;top:665.39px;font:normal 10.5px/10.5px 'Liberation Sans', sans-serif;color:#6f7794;white-space:nowrap;transform:scaleX(0.8800);">96k</div>
<div style="left:198.5px;top:658.7px;width:38.5px;height:23.59999999999991px;background:#111111;border:2px solid #6e6c85;border-radius:3px;box-sizing:border-box;box-shadow:0 0 0 1px #151515"></div>
<div style="left:-1782.25px;width:4000px;text-align:center;transform-origin:50% 0;top:665.39px;font:normal 10.5px/10.5px 'Liberation Sans', sans-serif;color:#6f7794;white-space:nowrap;transform:scaleX(0.8800);">192k</div>
<div style="left:239.6px;top:658.7px;width:39.29999999999998px;height:23.59999999999991px;background:#111111;border:2px solid #6e6c85;border-radius:3px;box-sizing:border-box;box-shadow:0 0 0 1px #151515"></div>
<div style="left:-1740.75px;width:4000px;text-align:center;transform-origin:50% 0;top:665.39px;font:normal 10.5px/10.5px 'Liberation Sans', sans-serif;color:#6f7794;white-space:nowrap;transform:scaleX(0.8800);">384k</div>
<div style="left:113px;top:686.6px;width:169.10000000000002px;height:11.799999999999955px;background:#acacac;border:1px solid #bcbcbc;border-radius:3px;box-sizing:border-box"></div>
<div style="left:-1802.45px;width:4000px;text-align:center;transform-origin:50% 0;top:688.06px;font:bold 9.08px/9.08px 'Liberation Sans', sans-serif;color:#f2f2f2;white-space:nowrap;">Sample Rate</div>
<div style="left:128.7px;top:703.7px;width:56.5px;height:26.899999999999977px;background:#1f1f42;border:2px solid #e2e0ff;border-radius:3px;box-sizing:border-box;box-shadow:0 0 0 1px #151515"></div>
<div style="left:-1843.05px;width:4000px;text-align:center;transform-origin:50% 0;top:711.56px;font:normal 11.5px/11.5px 'Liberation Sans', sans-serif;color:#ececff;white-space:nowrap;transform:scaleX(0.8382);">IDLE GEN</div>
<div style="left:220.6px;top:703.7px;width:57.900000000000006px;height:26.899999999999977px;background:#111111;border:2px solid #6e6c85;border-radius:3px;box-sizing:border-box;box-shadow:0 0 0 1px #151515"></div>
<div style="left:-1750.45px;width:4000px;text-align:center;transform-origin:50% 0;top:709.30px;font:normal 11px/11px 'Liberation Sans', sans-serif;color:#6f7794;white-space:nowrap;transform:scaleX(0.8800);">I2S</div>
<div style="left:235.1px;top:722.6px;width:29px;height:2.3px;background:#75738c"></div>
<div style="left:113px;top:733.8px;width:87px;height:14.200000000000045px;background:#acacac;border:1px solid #bcbcbc;border-radius:3px;box-sizing:border-box"></div>
<div style="left:115.00px;transform-origin:0 0;top:736.28px;font:bold 9.36px/9.36px 'Liberation Sans', sans-serif;color:#f2f2f2;white-space:nowrap;transform:scaleX(0.9201);">Tone Gen When Idle</div>
<div style="left:212px;top:733.8px;width:70.60000000000002px;height:14.200000000000045px;background:#acacac;border:1px solid #bcbcbc;border-radius:3px;box-sizing:border-box"></div>
<div style="left:214.00px;transform-origin:0 0;top:736.28px;font:bold 9.36px/9.36px 'Liberation Sans', sans-serif;color:#f2f2f2;white-space:nowrap;transform:scaleX(0.9701);">Front Panel I2S</div>
<div style="left:12px;top:763px;width:281px;height:5px;background:#ebebeb;border-top:2px solid #f6f6f6;box-sizing:border-box"></div>
<div style="left:99px;top:765.5px;width:9px;height:2.5px;background:#a0a0a0"></div>
<div style="left:113px;top:765.5px;width:9px;height:2.5px;background:#a0a0a0"></div>
<div style="left:126px;top:765.5px;width:9px;height:2.5px;background:#a0a0a0"></div>
<div style="left:139px;top:765.5px;width:9px;height:2.5px;background:#a0a0a0"></div>
<div style="left:152px;top:765.5px;width:9px;height:2.5px;background:#a0a0a0"></div>
<div style="left:165px;top:765.5px;width:9px;height:2.5px;background:#a0a0a0"></div>
<div style="left:178px;top:765.5px;width:9px;height:2.5px;background:#a0a0a0"></div>
<div style="left:191px;top:765.5px;width:9px;height:2.5px;background:#a0a0a0"></div>
<div style="left:320.0px;top:47px;width:138px;height:46px;background:#add8e6"></div>
<div style="left:320.0px;top:47px;width:138px;height:19px;background:#efefef;border-top:1px solid #fff;border-left:1px solid #fff;box-sizing:border-box"></div>
<div style="left:325.50px;transform-origin:0 0;top:49.95px;font:bold 14px/14px 'Liberation Sans', sans-serif;color:#000;white-space:nowrap;">Sys:FFT</div>
<div style="left:325.50px;transform-origin:0 0;top:70.59px;font:normal 17.5px/17.5px 'Liberation Sans', sans-serif;color:#000;white-space:nowrap;">128k</div>
<svg style="left:0;top:0" width="1" height="1"><path d="M428.0 55h8.5M428.0 58.5h8.5M428.0 62h8.5" stroke="#5a5a5a" stroke-width="2"/></svg>
<div style="left:442.5px;top:52.5px;width:11.5px;height:11.5px;background:#c4c4c4"></div>
<svg style="left:0;top:0" width="1" height="1"><path d="M444.3 54.3L452.3 62.3M452.3 54.3L444.3 62.3" stroke="#111" stroke-width="1.1"/></svg>
<div style="left:459.15px;top:47px;width:138px;height:46px;background:#ffffe0"></div>
<div style="left:459.15px;top:47px;width:138px;height:19px;background:#efefef;border-top:1px solid #fff;border-left:1px solid #fff;box-sizing:border-box"></div>
<div style="left:464.65px;transform-origin:0 0;top:49.95px;font:bold 14px/14px 'Liberation Sans', sans-serif;color:#000;white-space:nowrap;">L: THD dB</div>
<div style="left:464.65px;transform-origin:0 0;top:70.59px;font:normal 17.5px/17.5px 'Liberation Sans', sans-serif;color:#000;white-space:nowrap;">-129.47 dB</div>
<svg style="left:0;top:0" width="1" height="1"><path d="M567.15 55h8.5M567.15 58.5h8.5M567.15 62h8.5" stroke="#5a5a5a" stroke-width="2"/></svg>
<div style="left:581.65px;top:52.5px;width:11.5px;height:11.5px;background:#c4c4c4"></div>
<svg style="left:0;top:0" width="1" height="1"><path d="M583.4499999999999 54.3L591.45 62.3M591.45 54.3L583.4499999999999 62.3" stroke="#111" stroke-width="1.1"/></svg>
<div style="left:598.3px;top:47px;width:138px;height:46px;background:#ffffe0"></div>
<div style="left:598.3px;top:47px;width:138px;height:19px;background:#efefef;border-top:1px solid #fff;border-left:1px solid #fff;box-sizing:border-box"></div>
<div style="left:603.80px;transform-origin:0 0;top:49.95px;font:bold 14px/14px 'Liberation Sans', sans-serif;color:#000;white-space:nowrap;">L: THD+N dB</div>
<div style="left:603.80px;transform-origin:0 0;top:70.59px;font:normal 17.5px/17.5px 'Liberation Sans', sans-serif;color:#000;white-space:nowrap;">-109.81 dB</div>
<svg style="left:0;top:0" width="1" height="1"><path d="M706.3 55h8.5M706.3 58.5h8.5M706.3 62h8.5" stroke="#5a5a5a" stroke-width="2"/></svg>
<div style="left:720.8px;top:52.5px;width:11.5px;height:11.5px;background:#c4c4c4"></div>
<svg style="left:0;top:0" width="1" height="1"><path d="M722.5999999999999 54.3L730.5999999999999 62.3M730.5999999999999 54.3L722.5999999999999 62.3" stroke="#111" stroke-width="1.1"/></svg>
<div style="left:737.45px;top:47px;width:138px;height:46px;background:#ffffe0"></div>
<div style="left:737.45px;top:47px;width:138px;height:19px;background:#efefef;border-top:1px solid #fff;border-left:1px solid #fff;box-sizing:border-box"></div>
<div style="left:742.95px;transform-origin:0 0;top:49.95px;font:bold 14px/14px 'Liberation Sans', sans-serif;color:#000;white-space:nowrap;">L: N-D dBV</div>
<div style="left:742.95px;transform-origin:0 0;top:70.59px;font:normal 17.5px/17.5px 'Liberation Sans', sans-serif;color:#000;white-space:nowrap;">-110.40 dBV</div>
<svg style="left:0;top:0" width="1" height="1"><path d="M845.45 55h8.5M845.45 58.5h8.5M845.45 62h8.5" stroke="#5a5a5a" stroke-width="2"/></svg>
<div style="left:859.95px;top:52.5px;width:11.5px;height:11.5px;background:#c4c4c4"></div>
<svg style="left:0;top:0" width="1" height="1"><path d="M861.75 54.3L869.75 62.3M869.75 54.3L861.75 62.3" stroke="#111" stroke-width="1.1"/></svg>
<div style="left:876.6px;top:47px;width:138px;height:46px;background:#add8e6"></div>
<div style="left:876.6px;top:47px;width:138px;height:19px;background:#efefef;border-top:1px solid #fff;border-left:1px solid #fff;box-sizing:border-box"></div>
<div style="left:882.10px;transform-origin:0 0;top:49.95px;font:bold 14px/14px 'Liberation Sans', sans-serif;color:#000;white-space:nowrap;">Sys:Averag...</div>
<div style="left:882.10px;transform-origin:0 0;top:70.59px;font:normal 17.5px/17.5px 'Liberation Sans', sans-serif;color:#000;white-space:nowrap;">5/5</div>
<svg style="left:0;top:0" width="1" height="1"><path d="M984.6 55h8.5M984.6 58.5h8.5M984.6 62h8.5" stroke="#5a5a5a" stroke-width="2"/></svg>
<div style="left:999.1px;top:52.5px;width:11.5px;height:11.5px;background:#c4c4c4"></div>
<svg style="left:0;top:0" width="1" height="1"><path d="M1000.9 54.3L1008.9000000000001 62.3M1008.9000000000001 54.3L1000.9 62.3" stroke="#111" stroke-width="1.1"/></svg>
<div style="left:1015.75px;top:47px;width:138px;height:46px;background:#ffffe0"></div>
<div style="left:1015.75px;top:47px;width:138px;height:19px;background:#efefef;border-top:1px solid #fff;border-left:1px solid #fff;box-sizing:border-box"></div>
<div style="left:1021.25px;transform-origin:0 0;top:49.95px;font:bold 14px/14px 'Liberation Sans', sans-serif;color:#000;white-space:nowrap;">L: Peak dBV</div>
<div style="left:1021.25px;transform-origin:0 0;top:70.59px;font:normal 17.5px/17.5px 'Liberation Sans', sans-serif;color:#000;white-space:nowrap;">0.09 dBV</div>
<svg style="left:0;top:0" width="1" height="1"><path d="M1123.75 55h8.5M1123.75 58.5h8.5M1123.75 62h8.5" stroke="#5a5a5a" stroke-width="2"/></svg>
<div style="left:1138.25px;top:52.5px;width:11.5px;height:11.5px;background:#c4c4c4"></div>
<svg style="left:0;top:0" width="1" height="1"><path d="M1140.05 54.3L1148.05 62.3M1148.05 54.3L1140.05 62.3" stroke="#111" stroke-width="1.1"/></svg>
<div style="left:1154.9px;top:47px;width:138px;height:46px;background:#ffffe0"></div>
<div style="left:1154.9px;top:47px;width:138px;height:19px;background:#efefef;border-top:1px solid #fff;border-left:1px solid #fff;box-sizing:border-box"></div>
<div style="left:1160.40px;transform-origin:0 0;top:49.95px;font:bold 14px/14px 'Liberation Sans', sans-serif;color:#000;white-space:nowrap;">L: Peak Vrms</div>
<div style="left:1160.40px;transform-origin:0 0;top:70.59px;font:normal 17.5px/17.5px 'Liberation Sans', sans-serif;color:#000;white-space:nowrap;">1.01 Vrms</div>
<svg style="left:0;top:0" width="1" height="1"><path d="M1262.9 55h8.5M1262.9 58.5h8.5M1262.9 62h8.5" stroke="#5a5a5a" stroke-width="2"/></svg>
<div style="left:1277.4px;top:52.5px;width:11.5px;height:11.5px;background:#c4c4c4"></div>
<svg style="left:0;top:0" width="1" height="1"><path d="M1279.2 54.3L1287.2 62.3M1287.2 54.3L1279.2 62.3" stroke="#111" stroke-width="1.1"/></svg>
<div style="left:1294.05px;top:47px;width:138px;height:46px;background:#ffffe0"></div>
<div style="left:1294.05px;top:47px;width:138px;height:19px;background:#efefef;border-top:1px solid #fff;border-left:1px solid #fff;box-sizing:border-box"></div>
<div style="left:1299.55px;transform-origin:0 0;top:49.95px;font:bold 14px/14px 'Liberation Sans', sans-serif;color:#000;white-space:nowrap;">L: Freq Hz</div>
<div style="left:1299.55px;transform-origin:0 0;top:70.59px;font:normal 17.5px/17.5px 'Liberation Sans', sans-serif;color:#000;white-space:nowrap;">997.895 Hz</div>
<svg style="left:0;top:0" width="1" height="1"><path d="M1402.05 55h8.5M1402.05 58.5h8.5M1402.05 62h8.5" stroke="#5a5a5a" stroke-width="2"/></svg>
<div style="left:1416.55px;top:52.5px;width:11.5px;height:11.5px;background:#c4c4c4"></div>
<svg style="left:0;top:0" width="1" height="1"><path d="M1418.35 54.3L1426.35 62.3M1426.35 54.3L1418.35 62.3" stroke="#111" stroke-width="1.1"/></svg>
<svg style="left:0;top:0" width="1" height="1"><g fill="none"><path d="M427.5 106V717" stroke="#454545" stroke-width="1"/><path d="M471.5 106V717" stroke="#454545" stroke-width="1"/><path d="M505.5 106V717" stroke="#454545" stroke-width="1"/><path d="M532.5 106V717" stroke="#454545" stroke-width="1"/><path d="M556.5 106V717" stroke="#454545" stroke-width="1"/><path d="M576.5 106V717" stroke="#454545" stroke-width="1"/><path d="M594.5 106V717" stroke="#454545" stroke-width="1"/><path d="M610.5 106V717" stroke="#5e5e5e" stroke-width="1.2"/><path d="M715.5 106V717" stroke="#454545" stroke-width="1"/><path d="M776.5 106V717" stroke="#454545" stroke-width="1"/><path d="M820.5 106V717" stroke="#454545" stroke-width="1"/><path d="M853.5 106V717" stroke="#454545" stroke-width="1"/><path d="M881.5 106V717" stroke="#454545" stroke-width="1"/><path d="M904.5 106V717" stroke="#454545" stroke-width="1"/><path d="M925.5 106V717" stroke="#454545" stroke-width="1"/><path d="M942.5 106V717" stroke="#454545" stroke-width="1"/><path d="M958.5 106V717" stroke="#5e5e5e" stroke-width="1.2"/><path d="M1063.5 106V717" stroke="#454545" stroke-width="1"/><path d="M1125.5 106V717" stroke="#454545" stroke-width="1"/><path d="M1168.5 106V717" stroke="#454545" stroke-width="1"/><path d="M1202.5 106V717" stroke="#454545" stroke-width="1"/><path d="M1230.5 106V717" stroke="#454545" stroke-width="1"/><path d="M1253.5 106V717" stroke="#454545" stroke-width="1"/><path d="M1273.5 106V717" stroke="#454545" stroke-width="1"/><path d="M1291.5 106V717" stroke="#454545" stroke-width="1"/><path d="M1307.5 106V717" stroke="#5e5e5e" stroke-width="1.2"/><path d="M1412.5 106V717" stroke="#454545" stroke-width="1"/><path d="M371 130.5H1414" stroke="#444444" stroke-width="1"/><path d="M371 160.5H1414" stroke="#444444" stroke-width="1"/><path d="M371 190.5H1414" stroke="#444444" stroke-width="1"/><path d="M371 220.5H1414" stroke="#8c8c8c" stroke-width="1.4"/><path d="M371 250.5H1414" stroke="#444444" stroke-width="1"/><path d="M371 280.5H1414" stroke="#444444" stroke-width="1"/><path d="M371 309.5H1414" stroke="#444444" stroke-width="1"/><path d="M371 339.5H1414" stroke="#444444" stroke-width="1"/><path d="M371 369.5H1414" stroke="#5c5c5c" stroke-width="1.1"/><path d="M371 399.5H1414" stroke="#444444" stroke-width="1"/><path d="M371 429.5H1414" stroke="#444444" stroke-width="1"/><path d="M371 459.5H1414" stroke="#444444" stroke-width="1"/><path d="M371 489.5H1414" stroke="#444444" stroke-width="1"/><path d="M371 519.5H1414" stroke="#5c5c5c" stroke-width="1.1"/><path d="M371 549.5H1414" stroke="#444444" stroke-width="1"/><path d="M371 579.5H1414" stroke="#444444" stroke-width="1"/><path d="M371 608.5H1414" stroke="#444444" stroke-width="1"/><path d="M371 638.5H1414" stroke="#444444" stroke-width="1"/><path d="M371 668.5H1414" stroke="#5c5c5c" stroke-width="1.1"/><path d="M371 698.5H1414" stroke="#444444" stroke-width="1"/></g></svg>
<svg style="left:0;top:0" width="1" height="1"><path d="M369.5 717.5V104.5H1414.5V717.5Z" fill="none" stroke="#7a7a7a" stroke-width="1.6"/></svg>
<div style="left:999.40px;transform-origin:0 0;top:167.71px;font:normal 16.17px/16.17px 'Liberation Mono', monospace;color:#d884dc;white-space:nowrap;transform:scaleX(1.0005);">&nbsp;&nbsp;&nbsp;&nbsp;Freq&nbsp;&nbsp;&nbsp;&nbsp;&nbsp;&nbsp;&nbsp;Amp&nbsp;(dBV)&nbsp;&nbsp;Amp&nbsp;(dBr)</div>
<div style="left:999.40px;transform-origin:0 0;top:184.81px;font:normal 16.17px/16.17px 'Liberation Mono', monospace;color:#d884dc;white-space:nowrap;transform:scaleX(1.0005);">-----------------------------------</div>
<div style="left:999.40px;transform-origin:0 0;top:202.61px;font:normal 16.17px/16.17px 'Liberation Mono', monospace;color:#d884dc;white-space:nowrap;transform:scaleX(1.0005);">0.&nbsp;&nbsp;997.9&nbsp;Hz&nbsp;&nbsp;&nbsp;0.09&nbsp;&nbsp;&nbsp;&nbsp;&nbsp;&nbsp;&nbsp;---</div>
<div style="left:999.40px;transform-origin:0 0;top:220.51px;font:normal 16.17px/16.17px 'Liberation Mono', monospace;color:#d884dc;white-space:nowrap;transform:scaleX(1.0005);">1.&nbsp;&nbsp;2.993&nbsp;kHz&nbsp;&nbsp;-134.60&nbsp;&nbsp;&nbsp;&nbsp;-134.69</div>
<div style="left:999.40px;transform-origin:0 0;top:238.01px;font:normal 16.17px/16.17px 'Liberation Mono', monospace;color:#d884dc;white-space:nowrap;transform:scaleX(1.0005);">2.&nbsp;&nbsp;1.995&nbsp;kHz&nbsp;&nbsp;-137.63&nbsp;&nbsp;&nbsp;&nbsp;-137.72</div>
<div style="left:999.40px;transform-origin:0 0;top:255.91px;font:normal 16.17px/16.17px 'Liberation Mono', monospace;color:#d884dc;white-space:nowrap;transform:scaleX(1.0005);">3.&nbsp;&nbsp;3.991&nbsp;kHz&nbsp;&nbsp;-141.98&nbsp;&nbsp;&nbsp;&nbsp;-142.08</div>
<div style="left:999.40px;transform-origin:0 0;top:273.31px;font:normal 16.17px/16.17px 'Liberation Mono', monospace;color:#d884dc;white-space:nowrap;transform:scaleX(1.0005);">4.&nbsp;&nbsp;4.989&nbsp;kHz&nbsp;&nbsp;-143.72&nbsp;&nbsp;&nbsp;&nbsp;-143.81</div>
<div style="left:1279px;top:110.5px;width:31px;height:12.5px;border:1px solid #e8e8e8;box-sizing:border-box"></div>
<div style="left:1310px;top:110.5px;width:39px;height:12.5px;background:#fff"></div>
<div style="left:1281.00px;transform-origin:0 0;top:111.53px;font:normal 10px/10px 'Liberation Sans', sans-serif;color:#f0f0f0;white-space:nowrap;transform:scaleX(0.9908);">Quant</div>
<div style="left:1311.50px;transform-origin:0 0;top:111.53px;font:bold 10px/10px 'Liberation Sans', sans-serif;color:#000;white-space:nowrap;transform:scaleX(0.9827);">Asylum</div>
<div style="left:-686.50px;width:4000px;text-align:center;transform-origin:50% 0;top:125.70px;font:normal 7.8px/7.8px 'Liberation Sans', sans-serif;color:#e0e0e0;white-space:nowrap;transform:scaleX(0.9712);">QA40x v1.132</div>
<svg style="left:0;top:0" width="1" height="1"><g fill="none" stroke="#ffff00"><path d="M369.8 669.5 375.0 671.2 380.6 661.7 383.2 663.8 387.9 674.7 392.7 666.9 397.0 665.1 399.6 667.3 403.9 684.6 407.8 669.0 410.4 676.4 414.3 663.0 416.9 668.6 419.5 665.6 422.5 669.0 426.0 665.1 429.0 680.3 433.8 666.0 436.8 671.6 440.3 677.7 443.7 670.8 445.4 676.8 448.0 671.2 452.4 674.2 456.3 679.4 461.9 672.1 465.3 683.3 469.7 666.4 472.7 685.5 477.5 681.1 480.0 673.4 484.4 685.5 487.8 670.3 488.3 671.3 489.5 686.1 490.8 685.3 492.0 675.4 493.2 677.6 494.5 679.6 495.7 687.2 496.9 678.5 498.0 678.1 499.2 681.3 500.4 680.6 501.6 669.8 502.7 676.4 503.9 677.5 505.0 675.7 506.1 674.5 507.2 681.8 508.3 669.6 509.4 668.4 510.5 673.4 511.6 682.1 512.7 672.0 513.8 665.8 514.8 663.6 515.9 668.8 516.9 677.7 518.0 675.0 519.0 677.1 520.0 680.5 521.1 680.7 522.1 688.1 523.1 692.6 524.1 672.3 525.1 666.8 526.1 674.2 527.0 687.9 528.0 679.3 529.0 678.7 529.9 672.2 530.9 631.3 531.8 607.4 532.8 608.9 533.7 631.3 534.7 675.5 535.6 679.4 536.5 682.7 537.4 672.2 538.3 672.0 539.2 669.3 540.1 681.2 541.0 678.2 541.9 675.8 542.8 673.7 543.7 669.3 544.5 670.8 545.4 673.9 546.3 677.7 547.1 675.1 548.0 671.2 548.8 667.4 549.7 678.4 550.5 682.7 551.4 677.8 552.2 680.9 553.0 671.6 553.8 672.7 554.6 679.0 555.5 681.7 556.3 691.4 557.1 672.0 557.9 679.1 558.7 685.0 559.5 677.8 560.2 677.5 561.0 682.3 561.8 672.4 562.6 668.2 563.3 676.2 564.1 675.9 564.9 680.0 565.6 686.5 566.4 682.0 567.1 683.8 567.9 689.5 568.6 676.9 569.4 675.2 570.1 679.5 570.8 678.0 571.6 675.9 572.3 676.2 573.0 673.8 573.7 672.1 574.5 681.7 575.2 687.1 575.9 695.0 576.6 679.5 577.3 670.9 578.0 682.9 578.7 692.1 579.4 687.0 580.1 690.5 580.8 702.9 581.4 697.6 582.1 689.0 582.8 684.8 583.5 677.1 584.1 680.4 584.8 683.3 585.5 674.4 586.1 674.0 586.8 683.8 587.5 682.5 588.1 696.8 588.8 682.4 589.4 685.8 590.1 681.1 590.7 678.9 591.3 683.0 592.0 682.0 592.6 687.4 593.2 682.9 593.9 670.9 594.5 680.4 595.1 682.3 595.7 674.1 596.4 674.9 597.0 680.7 597.6 689.9 598.2 686.3 598.8 683.9 599.4 683.3 600.0 679.3 600.6 681.4 601.2 676.9 601.8 673.3" stroke-width="1.9" stroke-linejoin="round"/><path d="M600.5 676.1V684.1M601.5 672.5V682.2M602.5 672.5V679.4M603.5 677.1V682.2M604.5 678.2V684.7M605.5 678.5V685.3M606.5 678.5V689.1M607.5 678.5V690.9M608.5 679.7V690.9M609.5 676.4V685.6M610.5 676.4V681.1M611.5 671.5V681.1M612.5 671.5V679.3M613.5 674.7V685.4M614.5 677.5V685.4M615.5 677.5V682.6M616.5 673.2V682.6M617.5 673.2V682.5M618.5 672.8V679.7M619.5 672.8V679.1M620.5 674.5V683.3M621.5 671.5V683.8M622.5 671.5V688.4M623.5 678.0V688.4M624.5 678.1V682.0M625.5 676.9V684.8M626.5 675.6V684.8M627.5 675.6V684.4M628.5 669.3V684.4M629.5 669.3V680.4M630.5 675.5V691.1M631.5 687.3V691.7M632.5 676.7V691.7M633.5 674.2V681.0M634.5 674.2V692.7M635.5 682.5V692.8M636.5 677.1V692.8M637.5 677.1V684.0M638.5 674.1V684.0M639.5 674.1V685.9M640.5 672.4V685.9M641.5 672.4V689.5M642.5 680.9V697.1M643.5 676.0V697.1M644.5 672.0V682.8M645.5 672.0V690.5M646.5 680.7V690.5M647.5 676.0V690.7M648.5 676.0V690.7M649.5 677.6V685.6M650.5 680.5V688.4M651.5 685.0V690.8M652.5 679.5V690.8M653.5 676.0V688.6M654.5 676.0V694.7M655.5 676.5V701.8M656.5 674.4V690.5M657.5 674.4V697.3M658.5 686.2V697.3M659.5 682.9V691.0M660.5 682.9V698.3M661.5 683.5V698.3M662.5 678.2V689.7M663.5 678.9V691.5M664.5 678.9V696.4M665.5 679.4V696.4M666.5 679.4V699.6M667.5 677.8V699.6M668.5 674.2V686.1M669.5 674.2V686.3M670.5 675.1V685.7M671.5 677.7V685.7M672.5 678.3V691.4M673.5 684.0V696.2M674.5 681.6V696.2M675.5 671.9V691.0M676.5 671.9V684.4M677.5 672.5V695.1M678.5 680.1V695.1M679.5 679.4V690.5M680.5 679.1V685.1M681.5 672.6V686.7M682.5 673.6V689.3M683.5 673.3V689.3M684.5 673.3V691.9M685.5 678.8V692.6M686.5 679.1V692.6M687.5 679.1V695.6M688.5 679.6V695.6M689.5 679.2V690.6M690.5 684.8V699.2M691.5 680.6V699.2M692.5 678.9V685.5M693.5 678.9V695.5M694.5 680.0V705.5M695.5 678.2V705.5M696.5 674.6V690.5M697.5 680.8V693.4M698.5 678.3V687.0M699.5 678.3V692.3M700.5 680.9V692.3M701.5 677.5V685.0M702.5 682.3V706.7M703.5 680.3V696.4M704.5 680.3V691.8M705.5 681.5V690.4M706.5 680.5V690.4M707.5 680.5V696.5M708.5 684.1V696.5M709.5 684.5V692.7M710.5 677.8V690.9M711.5 683.9V695.8M712.5 681.4V696.9M713.5 676.9V690.2M714.5 674.0V686.4M715.5 674.6V686.4M716.5 672.5V686.3M717.5 672.5V688.8M718.5 677.7V692.8M719.5 675.2V690.8M720.5 685.1V696.0M721.5 676.8V688.9M722.5 676.8V693.1M723.5 680.7V693.1M724.5 674.5V692.4M725.5 674.5V683.9M726.5 674.7V690.8M727.5 677.8V690.8M728.5 682.7V700.9M729.5 678.8V700.9M730.5 678.8V691.0M731.5 682.1V709.6M732.5 676.9V687.1M733.5 675.4V686.2M734.5 673.7V684.6M735.5 679.5V704.2M736.5 673.9V696.6M737.5 676.1V692.4M738.5 676.1V692.7M739.5 679.7V693.5M740.5 673.1V697.9M741.5 671.7V684.5M742.5 678.8V697.8M743.5 684.2V697.6M744.5 683.1V697.6M745.5 683.1V690.3M746.5 681.0V691.9M747.5 679.5V695.0M748.5 672.4V695.0M749.5 672.4V690.4M750.5 676.9V688.2M751.5 676.9V689.0M752.5 682.7V699.3M753.5 672.9V695.7M754.5 676.5V706.3M755.5 672.0V706.3M756.5 671.9V689.7M757.5 676.6V694.2M758.5 680.6V694.2M759.5 684.4V693.1M760.5 676.7V689.5M761.5 676.7V704.3M762.5 682.7V704.3M763.5 682.7V698.1M764.5 679.0V689.0M765.5 679.0V685.7M766.5 676.2V686.5M767.5 674.3V692.1M768.5 677.5V698.9M769.5 678.0V690.5M770.5 676.4V695.1M771.5 676.4V687.9M772.5 678.0V693.4M773.5 684.0V699.3M774.5 681.5V704.2M775.5 647.9V704.2M776.5 677.7V702.6M777.5 677.7V700.7M778.5 677.7V705.9M779.5 679.6V705.9M780.5 679.6V692.7M781.5 674.6V695.9M782.5 674.6V688.9M783.5 674.7V692.6M784.5 677.6V699.1M785.5 677.6V693.6M786.5 679.0V698.7M787.5 677.6V699.8M788.5 677.6V699.4M789.5 679.6V693.3M790.5 676.6V698.6M791.5 674.8V690.0M792.5 674.7V691.4M793.5 679.8V694.5M794.5 677.9V693.2M795.5 677.2V695.9M796.5 674.5V687.9M797.5 680.8V698.3M798.5 674.4V696.2M799.5 678.5V696.2M800.5 674.9V691.3M801.5 681.3V689.6M802.5 673.7V691.5M803.5 673.7V692.5M804.5 683.3V692.8M805.5 678.8V689.9M806.5 678.8V691.8M807.5 676.8V693.1M808.5 676.8V689.0M809.5 679.3V695.3M810.5 679.1V695.3M811.5 681.1V697.4M812.5 680.7V711.5M813.5 674.5V692.4M814.5 674.5V688.4M815.5 680.3V692.5M816.5 675.1V692.5M817.5 676.4V697.0M818.5 681.0V699.8M819.5 670.4V696.2M820.5 677.6V696.2M821.5 674.3V695.3M822.5 676.8V691.2M823.5 677.5V689.0M824.5 678.0V691.9M825.5 673.1V687.9M826.5 677.1V690.5M827.5 671.8V687.7M828.5 671.8V685.6M829.5 671.8V696.0M830.5 674.7V696.0M831.5 674.0V690.9M832.5 678.5V694.5M833.5 670.6V694.5M834.5 680.6V694.5M835.5 678.8V694.5M836.5 677.1V693.4M837.5 678.4V691.5M838.5 678.4V694.0M839.5 677.0V696.5M840.5 673.6V693.6M841.5 676.3V687.2M842.5 677.7V701.3M843.5 677.1V705.9M844.5 677.1V693.1M845.5 677.3V693.7M846.5 672.0V699.1M847.5 672.0V695.7M848.5 679.6V692.6M849.5 671.8V698.3M850.5 672.7V695.2M851.5 675.6V691.7M852.5 678.4V694.1M853.5 672.9V694.0M854.5 672.9V699.5M855.5 676.2V690.1M856.5 677.3V691.8M857.5 678.8V691.7M858.5 670.2V691.7M859.5 670.2V698.9M860.5 678.3V686.4M861.5 677.7V694.0M862.5 672.5V697.4M863.5 667.0V690.8M864.5 673.2V691.1M865.5 661.9V691.1M866.5 677.6V693.8M867.5 674.8V687.6M868.5 671.2V688.6M869.5 671.2V694.6M870.5 672.9V687.7M871.5 675.9V691.1M872.5 666.4V690.7M873.5 675.4V688.0M874.5 672.7V686.0M875.5 672.3V686.7M876.5 671.4V703.6M877.5 671.4V689.4M878.5 665.8V692.2M879.5 675.1V691.3M956.5 392.1V512.2M957.5 219.1V410.5M958.5 340.4V512.8" stroke-width="1.8"/><path d="M880.5 675.6V692.2M881.5 671.5V686.0M882.5 673.1V691.7M883.5 670.1V688.7M884.5 669.5V692.6M885.5 669.3V683.7M886.5 666.0V693.7M887.5 676.8V691.1M888.5 671.9V689.3M889.5 670.9V701.1M890.5 672.5V691.9M891.5 672.1V688.9M892.5 668.1V689.3M893.5 667.3V690.6M894.5 671.3V693.1M895.5 667.0V692.0M896.5 666.8V685.5M897.5 665.1V690.4M898.5 669.2V689.3M899.5 661.1V688.8M900.5 667.8V688.3M901.5 667.8V694.5M902.5 664.4V680.8M903.5 664.4V683.3M904.5 664.2V683.3M905.5 663.0V679.3M906.5 663.0V683.0M907.5 661.7V683.0M908.5 661.0V678.6M909.5 662.6V681.0M910.5 665.4V682.5M911.5 664.9V685.8M912.5 663.6V684.7M913.5 661.2V681.6M914.5 662.8V681.6M915.5 663.8V678.5M916.5 659.9V676.4M917.5 659.9V681.5M918.5 656.5V685.1M919.5 662.0V691.3M920.5 657.7V686.9M921.5 659.6V683.3M922.5 657.2V681.9M923.5 651.1V681.9M924.5 651.1V679.7M925.5 652.7V686.4M926.5 653.4V675.6M927.5 654.5V680.6M928.5 653.1V681.8M929.5 648.3V672.3M930.5 652.2V676.0M931.5 649.5V676.5M932.5 646.8V672.9M933.5 648.4V672.9M934.5 648.4V670.9M935.5 649.6V673.3M936.5 647.1V677.7M937.5 647.3V670.6M938.5 646.9V665.8M939.5 642.1V669.5M940.5 642.9V664.4M941.5 640.8V663.8M942.5 640.8V664.2M943.5 636.8V657.9M944.5 633.5V657.9M945.5 632.4V650.8M946.5 620.6V649.3M947.5 622.5V641.2M948.5 620.7V643.8M949.5 612.5V640.5M950.5 607.1V623.7M951.5 595.1V625.4M952.5 587.5V606.4M953.5 555.4V590.2M954.5 526.8V572.7M955.5 498.7V544.6M959.5 498.5V542.6M960.5 526.4V567.7M961.5 553.2V594.0M962.5 580.7V615.3M963.5 605.4V625.3M964.5 615.8V634.1M965.5 616.3V634.0M966.5 622.7V641.7M967.5 625.1V646.4M968.5 631.5V653.3M969.5 635.0V659.2M970.5 638.0V658.6M971.5 640.8V662.2M972.5 643.1V666.4M973.5 646.1V667.2M974.5 645.3V671.4M975.5 646.4V671.4M976.5 648.4V675.4M977.5 648.5V672.5M978.5 650.4V671.1M979.5 645.3V669.8M980.5 645.5V669.8M981.5 652.1V683.6M982.5 654.1V681.6M983.5 658.4V676.4M984.5 659.0V683.5M985.5 656.0V677.6M986.5 656.2V682.5M987.5 658.5V682.5M988.5 657.4V675.8M989.5 657.4V684.0M990.5 657.6V681.9M991.5 657.6V681.9M992.5 664.3V679.4M993.5 660.0V680.0M994.5 663.3V685.7M995.5 659.0V684.6M996.5 659.0V688.3M997.5 662.3V687.9M998.5 665.3V691.9M999.5 667.1V687.8M1000.5 659.6V687.1M1001.5 663.8V694.7M1002.5 664.8V683.4M1003.5 670.1V693.5M1004.5 668.7V693.5M1005.5 667.7V692.6M1006.5 665.8V693.7M1007.5 671.2V691.9M1008.5 667.1V705.2M1009.5 673.7V694.1M1010.5 666.5V699.7M1011.5 667.1V700.1M1012.5 673.3V700.1M1013.5 670.5V694.6M1014.5 671.3V695.0M1015.5 672.7V691.0M1016.5 677.2V703.8M1017.5 674.7V697.1M1018.5 670.2V696.9M1019.5 677.2V710.9M1020.5 671.9V706.9M1021.5 677.5V700.0M1022.5 677.9V698.7M1023.5 673.0V701.4M1024.5 671.8V699.6M1025.5 675.7V711.5M1026.5 673.0V710.8M1027.5 675.5V704.6M1028.5 672.8V700.1M1029.5 677.2V698.2M1030.5 673.7V698.0M1031.5 679.1V700.2M1032.5 671.4V699.6M1033.5 676.4V697.3M1034.5 677.7V700.2M1035.5 672.5V707.7M1036.5 675.9V705.5M1037.5 672.5V702.5M1038.5 677.9V702.5M1039.5 675.7V702.9M1040.5 677.6V704.2M1041.5 675.5V712.6M1042.5 675.3V706.7M1043.5 670.3V700.0M1044.5 677.0V697.0M1045.5 674.9V701.6M1046.5 672.9V706.3M1047.5 679.3V703.8M1048.5 679.4V703.9M1049.5 677.1V705.7M1050.5 680.5V705.1M1051.5 678.1V700.6M1052.5 677.2V697.1M1053.5 679.7V709.0M1054.5 675.8V700.1M1055.5 675.1V705.7M1056.5 676.4V710.5M1057.5 674.5V700.6M1058.5 677.6V700.6M1059.5 677.3V697.3M1060.5 679.2V702.2M1061.5 676.1V707.3M1062.5 630.9V701.8M1063.5 674.9V705.5M1064.5 675.1V709.9M1065.5 678.7V707.9M1066.5 679.4V708.2M1067.5 676.6V705.0M1068.5 675.4V705.4M1069.5 677.4V701.7M1070.5 672.2V698.6M1071.5 678.9V703.1M1072.5 677.8V699.5M1073.5 670.5V701.8M1074.5 678.9V700.7M1075.5 677.6V698.4M1076.5 678.9V706.0M1077.5 675.1V705.3M1078.5 678.1V702.4M1079.5 679.3V701.1M1080.5 677.5V703.8M1081.5 674.6V713.2M1082.5 673.9V705.8M1083.5 676.8V708.9M1084.5 678.5V704.4M1085.5 679.1V709.6M1086.5 676.5V706.5M1087.5 677.9V704.3M1088.5 683.4V708.3M1089.5 679.3V712.0M1090.5 679.4V703.8M1091.5 679.1V706.7M1092.5 679.7V704.2M1093.5 679.8V702.6M1094.5 679.4V709.5M1095.5 679.9V704.1M1096.5 677.4V708.1M1097.5 677.4V703.3M1098.5 677.4V704.8M1099.5 677.4V701.9M1100.5 674.6V706.8M1101.5 676.8V708.8M1102.5 677.5V708.3M1103.5 676.8V705.5M1104.5 676.8V704.9M1105.5 678.0V704.2M1106.5 680.0V702.9M1107.5 673.2V712.8M1108.5 671.9V707.9M1109.5 677.4V708.3M1110.5 679.4V704.6M1111.5 677.3V701.9M1112.5 678.9V706.0M1113.5 678.2V707.7M1114.5 674.2V708.1M1115.5 675.8V708.0M1116.5 680.3V709.7M1117.5 674.0V709.0M1118.5 676.2V703.8M1119.5 666.8V707.0M1120.5 676.3V707.6M1121.5 681.7V700.7M1122.5 677.2V704.9M1123.5 621.9V704.7M1124.5 678.4V715.4M1125.5 676.7V706.9M1126.5 677.8V707.9M1127.5 682.0V702.8M1128.5 676.4V705.7M1129.5 677.9V701.0M1130.5 676.4V702.5M1131.5 675.1V708.8M1132.5 675.0V714.6M1133.5 677.7V707.5M1134.5 677.9V705.3M1135.5 677.7V702.9M1136.5 678.1V708.4M1137.5 679.8V707.8M1138.5 675.5V704.7M1139.5 677.8V702.3M1140.5 680.3V711.3M1141.5 671.8V705.1M1142.5 677.2V711.0M1143.5 677.9V702.4M1144.5 679.5V712.3M1145.5 676.5V712.3M1146.5 677.4V706.7M1147.5 673.6V707.9M1148.5 678.7V705.4M1149.5 678.9V706.0M1150.5 675.5V699.0M1151.5 673.2V716.7M1152.5 673.2V705.8M1153.5 679.4V702.4M1154.5 677.9V701.2M1155.5 677.1V714.7M1156.5 678.0V708.9M1157.5 679.8V705.6M1158.5 676.5V705.2M1159.5 678.0V705.0M1160.5 672.5V708.5M1161.5 677.4V712.8M1162.5 675.8V708.1M1163.5 680.0V708.1M1164.5 679.4V708.7M1165.5 678.3V711.1M1166.5 676.6V709.5M1167.5 643.9V711.0M1168.5 678.5V707.1M1169.5 678.5V705.2M1170.5 677.0V703.8M1171.5 675.8V703.8M1172.5 677.5V709.4M1173.5 676.7V707.1M1174.5 680.0V705.4M1175.5 678.1V705.9M1176.5 676.9V709.4M1177.5 677.5V709.1M1178.5 676.2V700.7M1179.5 679.0V704.9M1180.5 678.1V707.4M1181.5 677.9V716.0M1182.5 681.2V704.7M1183.5 678.8V718.3M1184.5 679.0V703.3M1185.5 679.7V705.3M1186.5 683.0V704.6M1187.5 680.7V704.1M1188.5 678.6V703.9M1189.5 679.4V705.5M1190.5 677.1V704.2M1191.5 677.5V710.8M1192.5 677.5V713.2M1193.5 680.1V705.6M1194.5 680.1V706.7M1195.5 680.4V709.8M1196.5 682.4V715.4M1197.5 679.9V709.0M1198.5 679.9V703.7M1199.5 678.5V706.1M1200.5 679.7V704.4M1201.5 649.1V706.0M1202.5 678.6V708.4M1203.5 678.4V708.6M1204.5 677.3V708.2M1205.5 676.4V702.6M1206.5 680.4V707.1M1207.5 678.1V718.3M1208.5 680.4V708.3M1209.5 679.2V710.5M1210.5 681.3V703.1M1211.5 676.6V711.8M1212.5 680.0V701.5M1213.5 677.9V709.7M1214.5 675.8V715.1M1215.5 679.9V708.3M1216.5 676.4V709.5M1217.5 680.7V704.6M1218.5 681.2V707.1M1219.5 679.9V703.3M1220.5 675.5V709.4M1221.5 681.9V708.4M1222.5 678.9V705.1M1223.5 678.7V702.7M1224.5 676.2V707.3M1225.5 677.2V708.3M1226.5 681.4V711.2M1227.5 666.0V704.4M1228.5 666.0V710.7M1229.5 677.0V706.5M1230.5 679.0V709.8M1231.5 678.7V712.8M1232.5 679.5V706.8M1233.5 678.0V704.8M1234.5 676.2V704.7M1235.5 678.9V710.6M1236.5 676.3V708.9M1237.5 680.2V703.8M1238.5 678.8V715.4M1239.5 675.1V705.7M1240.5 678.7V708.9M1241.5 678.3V706.8M1242.5 681.0V704.8M1243.5 678.5V710.1M1244.5 676.7V706.7M1245.5 679.7V710.4M1246.5 679.5V708.0M1247.5 678.2V704.8M1248.5 679.1V712.0M1249.5 680.5V704.0M1250.5 679.8V710.9M1251.5 654.9V712.9M1252.5 679.6V710.9M1253.5 681.9V707.7M1254.5 681.1V707.2M1255.5 679.5V707.1M1256.5 679.1V710.7M1257.5 680.9V708.3M1258.5 679.9V708.7M1259.5 654.9V712.1M1260.5 617.6V708.1M1261.5 678.4V713.9M1262.5 677.8V708.6M1263.5 680.2V706.7M1264.5 679.2V715.5M1265.5 676.2V715.8M1266.5 676.7V705.9M1267.5 681.2V703.7M1268.5 680.3V713.4M1269.5 682.4V709.7M1270.5 678.7V717.3M1271.5 682.8V710.6M1272.5 678.6V716.0M1273.5 677.3V708.2M1274.5 681.0V712.6M1275.5 677.1V708.6M1276.5 677.7V710.0M1277.5 678.5V706.0M1278.5 678.3V713.3M1279.5 678.8V707.8M1280.5 679.6V707.0M1281.5 679.1V705.2M1282.5 678.3V713.3M1283.5 677.8V709.9M1284.5 680.3V707.9M1285.5 679.8V707.8M1286.5 679.0V705.8M1287.5 676.9V715.1M1288.5 677.7V715.6M1289.5 628.1V706.2M1290.5 679.0V706.3M1291.5 677.0V708.2M1292.5 679.3V718.3M1293.5 679.3V712.7M1294.5 680.4V709.1M1295.5 680.1V708.5M1296.5 679.7V710.8M1297.5 679.1V713.7M1298.5 680.6V711.2M1299.5 678.5V705.2M1300.5 679.3V706.7M1301.5 679.3V711.0M1302.5 678.9V709.8M1303.5 679.3V710.9M1304.5 679.4V706.2M1305.5 648.6V714.9M1306.5 681.2V709.1M1307.5 679.6V712.9M1308.5 679.1V708.5M1309.5 680.5V708.9M1310.5 676.1V713.0M1311.5 679.1V713.0M1312.5 677.8V712.0M1313.5 681.4V705.9M1314.5 682.6V708.8M1315.5 679.6V707.2M1316.5 675.3V710.7M1317.5 678.0V707.9M1318.5 678.1V707.7M1319.5 632.8V715.9M1320.5 676.9V711.9M1321.5 675.5V707.8M1322.5 681.0V708.3M1323.5 676.1V706.1M1324.5 674.6V707.0M1325.5 655.5V714.2M1326.5 679.5V712.5M1327.5 658.2V708.0M1328.5 679.0V708.2M1329.5 677.7V711.1M1330.5 679.6V712.4M1331.5 679.4V709.6M1332.5 681.7V709.7M1333.5 658.9V709.0M1334.5 680.9V713.3M1335.5 680.2V712.6M1336.5 677.5V709.0M1337.5 679.3V711.5M1338.5 678.2V711.6M1339.5 679.7V708.2M1340.5 680.3V710.2M1341.5 681.3V712.3M1342.5 678.7V711.5M1343.5 679.6V713.9M1344.5 679.7V710.7M1345.5 679.3V718.3M1346.5 679.3V709.2M1347.5 679.5V711.0M1348.5 682.4V710.4M1349.5 679.4V713.2M1350.5 679.6V708.8M1351.5 677.1V715.9M1352.5 679.4V715.9M1353.5 680.0V711.8M1354.5 678.4V710.4M1355.5 679.0V708.7M1356.5 640.5V713.2M1357.5 680.2V708.5M1358.5 677.1V711.7M1359.5 677.1V712.3M1360.5 679.4V718.3M1361.5 678.6V717.1M1362.5 677.7V712.2M1363.5 675.8V709.6M1364.5 681.2V715.6M1365.5 681.2V710.4M1366.5 678.0V712.4M1367.5 652.8V711.2M1368.5 679.4V712.3M1369.5 678.5V718.3M1370.5 681.4V713.0M1371.5 677.7V711.5M1372.5 675.7V713.9M1373.5 676.5V713.4M1374.5 677.4V712.6M1375.5 678.3V711.5M1376.5 677.5V716.0M1377.5 616.8V712.4M1378.5 677.6V712.5M1379.5 680.7V708.5M1380.5 677.4V717.4M1381.5 680.1V710.3M1382.5 679.8V711.2M1383.5 677.5V714.4M1384.5 679.1V712.8M1385.5 678.8V709.2M1386.5 679.3V718.3M1387.5 679.4V712.1M1388.5 679.5V709.7M1389.5 679.1V718.3M1390.5 677.5V713.8M1391.5 681.7V712.7M1392.5 681.2V711.7M1393.5 678.9V713.5M1394.5 637.3V710.0M1395.5 682.7V712.1M1396.5 680.7V713.7M1397.5 677.9V718.3M1398.5 677.9V714.4M1399.5 679.9V712.4M1400.5 668.6V715.2M1401.5 679.0V712.9M1402.5 681.3V711.4M1403.5 680.7V715.0M1404.5 681.7V716.4M1405.5 680.7V717.0M1406.5 677.6V713.2M1407.5 680.5V712.0M1408.5 678.9V716.4M1409.5 678.8V714.5M1410.5 650.2V715.5M1411.5 680.7V707.7M1412.5 680.0V710.1M1413.5 680.3V710.6M1414.5 680.1V713.3" stroke-width="1.4"/></g></svg>
<div style="left:1349px;top:664px;width:33px;height:35px;background:rgba(0,0,0,0.5)"></div>
<svg style="left:0;top:0" width="1" height="1"><path d="M1355.3 679.8L1360.6 674.6V677.3H1370.5Q1374.8 677.3 1374.8 681.5V687L1372.2 684.5V682.6Q1372.2 682 1371.4 682H1360.6V685.2Z" fill="#fff"/></svg>
<div style="left:952.8px;top:184.3px;width:11.300000000000068px;height:15.299999999999983px;background:#f08cf0;"></div>
<div style="left:-1041.55px;width:4000px;text-align:center;transform-origin:50% 0;top:186.64px;font:normal 11px/11px 'Liberation Sans', sans-serif;color:#2a1a3a;white-space:nowrap;">0</div>
<div style="left:1057.1px;top:597.4px;width:11.300000000000182px;height:14.200000000000045px;background:#f08cf0;"></div>
<div style="left:-937.25px;width:4000px;text-align:center;transform-origin:50% 0;top:599.19px;font:normal 11px/11px 'Liberation Sans', sans-serif;color:#2a1a3a;white-space:nowrap;">2</div>
<div style="left:1118.9px;top:588px;width:10.5px;height:14.600000000000023px;background:#f08cf0;"></div>
<div style="left:-875.85px;width:4000px;text-align:center;transform-origin:50% 0;top:589.99px;font:normal 11px/11px 'Liberation Sans', sans-serif;color:#2a1a3a;white-space:nowrap;">1</div>
<div style="left:1162.8px;top:610.2px;width:10.200000000000045px;height:14.5px;background:#f08cf0;"></div>
<div style="left:-832.10px;width:4000px;text-align:center;transform-origin:50% 0;top:612.14px;font:normal 11px/11px 'Liberation Sans', sans-serif;color:#2a1a3a;white-space:nowrap;">3</div>
<div style="left:1196.5px;top:615.5px;width:10.5px;height:14.5px;background:#f08cf0;"></div>
<div style="left:-798.25px;width:4000px;text-align:center;transform-origin:50% 0;top:617.44px;font:normal 11px/11px 'Liberation Sans', sans-serif;color:#2a1a3a;white-space:nowrap;">4</div>
<div style="left:953.6px;top:692.7px;width:9.600000000000023px;height:12.399999999999977px;background:#008800;border:1px solid #00b400;box-sizing:border-box"></div>
<div style="left:-1041.60px;width:4000px;text-align:center;transform-origin:50% 0;top:693.59px;font:normal 11px/11px 'Liberation Sans', sans-serif;color:#000;white-space:nowrap;">F</div>
<div style="left:-1651.50px;width:4000px;text-align:center;transform-origin:50% 0;top:214.89px;font:normal 11px/11px 'Liberation Sans', sans-serif;color:#fff;white-space:nowrap;">0</div>
<div style="left:-1651.50px;width:4000px;text-align:center;transform-origin:50% 0;top:364.39px;font:normal 11px/11px 'Liberation Sans', sans-serif;color:#fff;white-space:nowrap;">-50</div>
<div style="left:-1651.50px;width:4000px;text-align:center;transform-origin:50% 0;top:513.89px;font:normal 11px/11px 'Liberation Sans', sans-serif;color:#fff;white-space:nowrap;">-100</div>
<div style="left:-1651.50px;width:4000px;text-align:center;transform-origin:50% 0;top:663.39px;font:normal 11px/11px 'Liberation Sans', sans-serif;color:#fff;white-space:nowrap;">-150</div>
<div style="left:-1389.80px;width:4000px;text-align:center;transform-origin:50% 0;top:725.89px;font:normal 11px/11px 'Liberation Sans', sans-serif;color:#fff;white-space:nowrap;">100</div>
<div style="left:-1041.50px;width:4000px;text-align:center;transform-origin:50% 0;top:725.89px;font:normal 11px/11px 'Liberation Sans', sans-serif;color:#fff;white-space:nowrap;">1000</div>
<div style="left:-693.50px;width:4000px;text-align:center;transform-origin:50% 0;top:725.89px;font:normal 11px/11px 'Liberation Sans', sans-serif;color:#fff;white-space:nowrap;">10000</div>
<div style="left:-1109.20px;width:4000px;text-align:center;transform-origin:50% 0;top:743.19px;font:bold 11px/11px 'Liberation Sans', sans-serif;color:#fff;white-space:nowrap;transform:scaleX(0.9689);">Frequency (Hz)</div>
<div style="left:304.7px;top:404px;width:40px;height:13px;text-align:center;font:bold 11px/13px 'Liberation Sans', sans-serif;color:#fff;transform:rotate(-90deg);transform-origin:50% 50%">dBV</div>
</body></html>
